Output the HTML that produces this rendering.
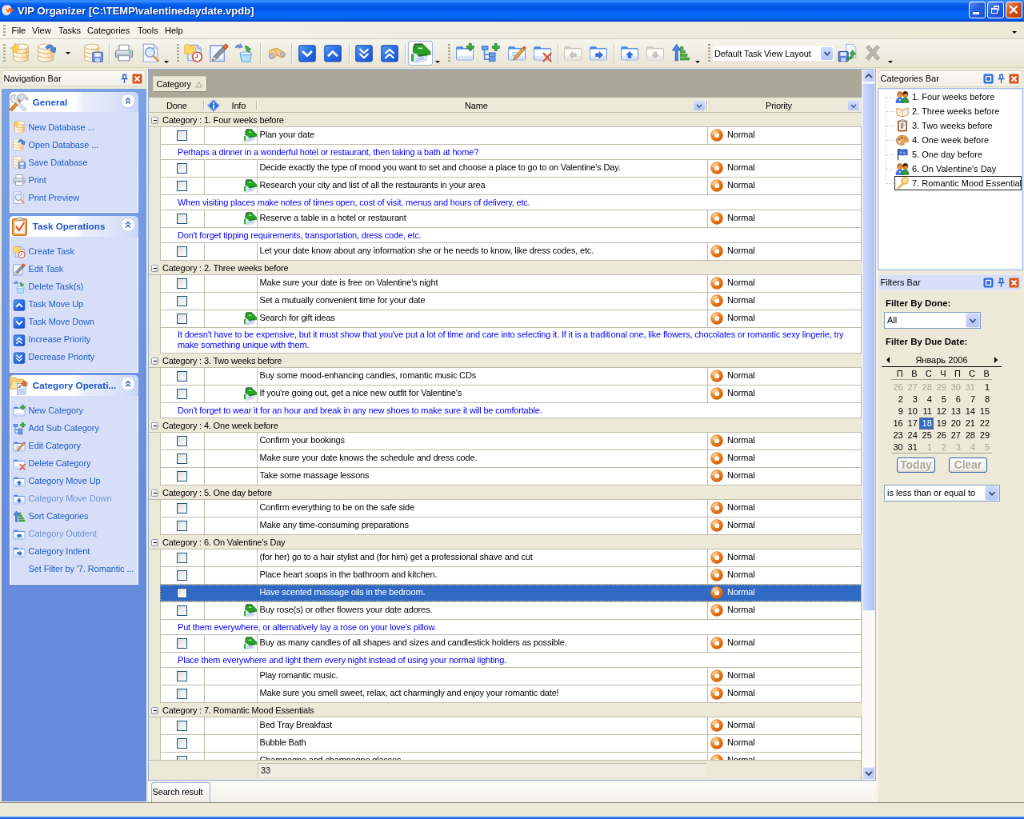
<!DOCTYPE html>
<html><head><meta charset="utf-8"><title>VIP Organizer</title><style>
html,body{margin:0;padding:0;background:#ece9d8;overflow:hidden;}
body{width:1024px;height:819px;position:relative;font-family:"Liberation Sans",sans-serif;}
#root{will-change:transform;position:absolute;left:0;top:0;width:1280px;height:1024px;transform:scale(0.8,0.79981);transform-origin:0 0;background:#ece9d8;font-size:11px;color:#000;overflow:hidden;}
.a{position:absolute;}
.t{position:absolute;white-space:nowrap;line-height:14px;}
svg{position:absolute;overflow:visible;}
/* title */
#title{left:0;top:0;width:1280px;height:26.500px;background:linear-gradient(#2a80fa 0%,#3a93ff 7%,#0f68f0 15%,#0056e4 30%,#0058e8 42%,#0566f6 55%,#0668f8 84%,#0452e0 92%,#003ac4 100%);}
#title .t{left:22px;top:4.800px;font-size:13.05px;font-weight:bold;color:#fff;line-height:18px;text-shadow:1px 1px 0 #0a1f7c;}
.tb{position:absolute;top:2px;width:21px;height:21px;border-radius:3px;border:1px solid #fff;box-sizing:border-box;background:linear-gradient(135deg,#5d8ff5 0%,#2a5fe0 40%,#1d4fd0 100%);}
.tb.c{background:linear-gradient(135deg,#e8966a 0%,#d5501b 45%,#b83a0a 100%);}
/* menu */
#menu{left:0;top:26.500px;width:1280px;height:21.500px;background:linear-gradient(90deg,#f7f6ef 0%,#efede1 40%,#ece9d8 100%);}
#menu .t{top:4px;}
#tool{left:0;top:49px;width:1280px;height:35px;background:#ece9d8;}
#toolg{left:0;top:0;width:1280px;height:35px;background:linear-gradient(#f6f5ee 0%,#efede1 45%,#e9e6d5 100%);}
.grip{position:absolute;width:2.500px;background:repeating-linear-gradient(#a9a692 0 2px,transparent 2px 4px);}
.sep{position:absolute;width:1px;background:#c5c2b2;box-shadow:1px 0 0 #fff;}
.dd{position:absolute;width:0;height:0;border-left:3px solid transparent;border-right:3px solid transparent;border-top:3.500px solid #000;}
/* nav */
#navhdr{left:2px;top:88px;width:180px;height:20px;border-radius:4px;border:1px solid #dcd9c9;box-sizing:border-box;background:linear-gradient(#fbfaf6,#f1efe3);}
#nav{left:2px;top:111px;width:181px;height:891px;background:linear-gradient(#7ba2e7 0%,#668bdd 62%,#668bdd 100%);}
.gh{position:absolute;left:10px;width:161px;height:25px;border-radius:5px 5px 0 0;background:linear-gradient(90deg,#fff 0%,#fff 50%,#e9eefc 58%,#dbe4fa 80%,#c9d6f8 100%);}
.gh .t{left:28.700px;top:5px;font-weight:bold;font-size:11.700px;color:#1c55c8;line-height:15px;}
.gb{position:absolute;left:10px;width:161px;box-sizing:border-box;border:1px solid #fff;border-top:none;background:#d6dff7;}
.ni{position:absolute;left:33.5px;color:#215dc6;white-space:nowrap;line-height:14px;letter-spacing:-0.100px;}
.ni.d{color:#6d93d8;}
.chev{position:absolute;left:139.700px;top:3.200px;width:16px;height:16px;border-radius:8px;background:#fff;box-shadow:0 0 0 1px #c2d0f2;}
/* grid */
#grid{left:185px;top:87px;width:893px;height:889px;background:#fff;}
#gpanel{left:186px;top:87px;width:891px;height:34.800px;background:#aca899;}
#ghead{left:185px;top:121.800px;width:892px;height:19.200px;background:#ece9d8;}
.row{position:absolute;left:185px;width:892px;}
.cat{background:#ece9d8;border-bottom:1px solid #bfbcab;box-sizing:border-box;}
.cat .t{left:18px;top:1.600px;}
.task{background:#ece9d8;}
.gl{position:absolute;background:#bfbcab;}
.cell{position:absolute;top:0;bottom:0;border-left:1px solid #bfbcab;border-bottom:1px solid #bfbcab;box-sizing:border-box;background:#fff;}
.gt{letter-spacing:-0.175px;}
.cb{position:absolute;width:13px;height:13px;box-sizing:border-box;border:1px solid #1c5180;background:linear-gradient(135deg,#dcdcd7,#fff);}
.note{color:#0000ff;}
.sel .cell{background:#316ac5;border-left-color:#316ac5;}
.sel .t{color:#fff;}
.fbtn{position:absolute;width:14px;height:12px;border-radius:2px;background:linear-gradient(#d4ddf8,#b6c6f0);box-shadow:0 0 0 1px #e4eafb;}
/* right */
.phdr{position:absolute;left:1098px;width:180px;height:20px;border-radius:4px;box-sizing:border-box;}
</style></head><body><div id="root">
<div class="a" id="title">
<svg style="left:2px;top:5px" width="16" height="16" viewBox="0 0 16 16"><path d="M.5 7c0-3.500 2.500-5.800 6-5.800 2.500 0 4.500 1 5.500 2.800l-1 7.500c-1.200 1.700-3 2.700-5 2.700C2.800 14.200.5 11 .5 7z" fill="#f6e9e6" stroke="#d9b4aa" stroke-width=".5"/><path d="M1 5.500c1.500-2 3.500-3 5.500-3" fill="none" stroke="#f2b8a0" stroke-width="1.200"/><path d="M6 6.500l2 3.500 1.800-4.500M11 6v4.500M12.500 10.500V6.200c2.800-.3 3 2.600.6 2.800" fill="none" stroke="#e8641a" stroke-width="1.500" stroke-linecap="round" stroke-linejoin="round"/><path d="M3 12.500c2 1 5 1 7 .2" fill="none" stroke="#9fb4e0" stroke-width="1"/></svg>
<div class="t">VIP Organizer [C:\TEMP\valentinedaydate.vpdb]</div>
<div class="tb" style="left:1211px"><div style="position:absolute;left:4px;top:12px;width:8px;height:3px;background:#fff"></div></div>
<div class="tb" style="left:1234px"><div style="position:absolute;left:7px;top:4px;width:7px;height:6px;border:1px solid #fff;border-top-width:2px;box-sizing:border-box"></div><div style="position:absolute;left:4px;top:7px;width:8px;height:7px;border:1px solid #fff;border-top-width:2px;box-sizing:border-box;background:#2a5fe0"></div></div>
<div class="tb c" style="left:1257px"><svg style="left:0px;top:0px" width="18" height="18" viewBox="0 0 18 18"><path d="M5 5l8 8M13 5l-8 8" stroke="#fff" stroke-width="2.200" stroke-linecap="round"/></svg></div>
</div>
<div class="a" id="menu">
<div class="grip" style="left:4px;top:4px;height:14px"></div>
<div class="t" style="left:14.5px">File</div>
<div class="t" style="left:40px">View</div>
<div class="t" style="left:73px">Tasks</div>
<div class="t" style="left:109px">Categories</div>
<div class="t" style="left:172px">Tools</div>
<div class="t" style="left:206px">Help</div>
<div class="dd" style="left:1265px;top:12px"></div>
</div>
<div class="a" style="left:0;top:48px;width:1280px;height:1px;background:#cfc8b8"></div>
<div class="a" id="tool"><div class="a" id="toolg"></div>
<div class="grip" style="left:4px;top:6px;height:24px"></div><svg style="left:12.600000000000001px;top:5px" width="24" height="24" viewBox="0 0 16 16"><defs><linearGradient id="cg" x1="0" x2="1"><stop offset="0" stop-color="#fffdf6"/><stop offset=".5" stop-color="#fbf0d8"/><stop offset="1" stop-color="#efcf98"/></linearGradient></defs><path d="M2.4 2.9V13.100000000000001A6.25 2.3 0 0 0 14.9 13.100000000000001V2.9z" fill="url(#cg)" stroke="#cdb892" stroke-width=".7"/><ellipse cx="8.65" cy="2.9" rx="6.25" ry="2.3" fill="#fff8e6" stroke="#cdb892" stroke-width=".7"/><path d="M2.4 6.300000000000001A6.25 2.3 0 0 0 14.9 6.300000000000001M2.4 9.700000000000001A6.25 2.3 0 0 0 14.9 9.700000000000001" fill="none" stroke="#e9b66a" stroke-width=".8"/><path d="M13.3 4.1V13.700000000000001" stroke="#f2a63a" stroke-width="1" stroke-dasharray="1 1" opacity=".8"/><path d="M4 0l.9 2.600 2.600-.9-1.500 2.300 2.200 1.400-2.700.3-.2 2.700L3.900 6.100 1.600 7.600l.9-2.500L0 3.900l2.700-.5z" fill="#ffd24a" stroke="#f2a21a" stroke-width=".4"/></svg><svg style="left:47.3px;top:5px" width="24" height="24" viewBox="0 0 16 16"><defs><linearGradient id="cg" x1="0" x2="1"><stop offset="0" stop-color="#fffdf6"/><stop offset=".5" stop-color="#fbf0d8"/><stop offset="1" stop-color="#efcf98"/></linearGradient></defs><path d="M0.5 2.9V13.100000000000001A6.35 2.3 0 0 0 13.2 13.100000000000001V2.9z" fill="url(#cg)" stroke="#cdb892" stroke-width=".7"/><ellipse cx="6.85" cy="2.9" rx="6.35" ry="2.3" fill="#fff8e6" stroke="#cdb892" stroke-width=".7"/><path d="M0.5 6.300000000000001A6.35 2.3 0 0 0 13.2 6.300000000000001M0.5 9.700000000000001A6.35 2.3 0 0 0 13.2 9.700000000000001" fill="none" stroke="#e9b66a" stroke-width=".8"/><path d="M11.6 4.1V13.700000000000001" stroke="#f2a63a" stroke-width="1" stroke-dasharray="1 1" opacity=".8"/><path d="M6.500 3.200c2.500-2.600 6-1.800 7.200 1l1.500-.6-.7 4.400-4-2 1.500-.7c-.9-1.500-2.700-1.800-4-.5z" fill="#4a8ae0" stroke="#2a5cae" stroke-width=".5"/></svg><div class="dd" style="left:82px;top:16px"></div><svg style="left:105px;top:5px" width="24" height="24" viewBox="0 0 16 16"><defs><linearGradient id="cg" x1="0" x2="1"><stop offset="0" stop-color="#fffdf6"/><stop offset=".5" stop-color="#fbf0d8"/><stop offset="1" stop-color="#efcf98"/></linearGradient></defs><path d="M0.5 2.9V13.100000000000001A6.0 2.3 0 0 0 12.5 13.100000000000001V2.9z" fill="url(#cg)" stroke="#cdb892" stroke-width=".7"/><ellipse cx="6.5" cy="2.9" rx="6.0" ry="2.3" fill="#fff8e6" stroke="#cdb892" stroke-width=".7"/><path d="M0.5 6.300000000000001A6.0 2.3 0 0 0 12.5 6.300000000000001M0.5 9.700000000000001A6.0 2.3 0 0 0 12.5 9.700000000000001" fill="none" stroke="#e9b66a" stroke-width=".8"/><path d="M10.9 4.1V13.700000000000001" stroke="#f2a63a" stroke-width="1" stroke-dasharray="1 1" opacity=".8"/><rect x="7.200" y="7.500" width="8.300" height="8" rx=".8" fill="#6f94e0" stroke="#3f62b8" stroke-width=".7"/><rect x="8.800" y="8" width="5" height="3.200" fill="#eef2fc"/><rect x="9.300" y="12.600" width="4" height="2.900" fill="#c9d6f2"/></svg><div class="sep" style="left:136px;top:5px;height:26px"></div><svg style="left:143px;top:5px" width="24" height="24" viewBox="0 0 16 16"><path d="M4 6V1.5h8V6" fill="#fff" stroke="#8c96a8" stroke-width=".8"/><rect x="1" y="6" width="14" height="6" rx="1.2" fill="#dfe3ea" stroke="#7d8798" stroke-width=".8"/><rect x="1.4" y="8.5" width="13.2" height="3" fill="#b9c0cc"/><path d="M3.5 10.5h9v4h-9z" fill="#fff" stroke="#8c96a8" stroke-width=".8"/><circle cx="13" cy="7.6" r=".7" fill="#3fae3f"/></svg><svg style="left:177px;top:5px" width="24" height="24" viewBox="0 0 16 16"><path d="M1.500 .8h8.500l3.200 3.200v11.500H1.500z" fill="#f4f7fd" stroke="#9fb0d4" stroke-width=".8"/><path d="M10 .8v3.200h3.200" fill="#dfe6f6" stroke="#9fb0d4" stroke-width=".7"/><circle cx="7" cy="7.600" r="3.900" fill="#dcebfb" stroke="#86a4d8" stroke-width="1.100"/><path d="M9.900 10.600l3.900 4" stroke="#e09a5a" stroke-width="1.900" stroke-linecap="round"/></svg><div class="dd" style="left:205px;top:27px"></div><div class="grip" style="left:221px;top:6px;height:24px"></div><svg style="left:230px;top:5px" width="24" height="24" viewBox="0 0 16 16"><path d="M3.200 1.500h8l3 3v10H3.200z" fill="#dfe9fb" stroke="#86a0dc" stroke-width=".8"/><path d="M11.200 1.500v3h3" fill="#c6d6f6" stroke="#86a0dc" stroke-width=".6"/><path d="M.5 2.200c0-.6.400-1 1-1h2.500l.8 1h4c.6 0 1 .4 1 1v3.600l-2 .6-1.600 1.700-3-.6-2.700.3z" fill="#ffd866" stroke="#e8a834" stroke-width=".5"/><circle cx="11" cy="11.400" r="3.900" fill="#fff" stroke="#d6482c" stroke-width="1.100"/><path d="M11 9.200v2.400l-1.800.6" fill="none" stroke="#556" stroke-width=".8"/></svg><svg style="left:261.6px;top:5px" width="24" height="24" viewBox="0 0 16 16"><path d="M.6 2h11.600v13H.6z" fill="#f2f6fe" stroke="#7f98d0" stroke-width=".9"/><path d="M1 12.500h10.800v2H1z" fill="#c9d8f6"/><path d="M3.200 11.200L11 3l2.400 2.200-7.800 8.200-3.200 1z" fill="#8a93a2" stroke="#555e6c" stroke-width=".5"/><path d="M11 3l1.600-1.800c.5-.5 1.300-.5 1.800 0l.6.600c.5.500.5 1.300 0 1.800L13.400 5.200z" fill="#e4682e" stroke="#a8401a" stroke-width=".5"/><path d="M2.400 14.400l.8-3.200 2.400 2.200z" fill="#f3d9a6"/><path d="M2.400 14.400l.3-1.200.9.800z" fill="#c8501e"/></svg><svg style="left:293px;top:5px" width="24" height="24" viewBox="0 0 16 16"><path d="M4.800 8.500h9.400l-1.200 7H6z" fill="#b9dcfa" stroke="#6aaee4" stroke-width=".8"/><ellipse cx="9.500" cy="8.500" rx="4.700" ry="1.400" fill="#e4f3fd" stroke="#6aaee4" stroke-width=".7"/><path d="M9 2.300c1.700 0 2.900.7 3.300 2.200l1.300-.3-1.300 3.400-3-1.900 1.300-.4c-.3-.8-.9-1.100-1.700-1.100z" fill="#3fae3f" stroke="#23802a" stroke-width=".4"/><path d="M.8 3.500c.5-1.700 2.200-2.500 3.800-2l.3-1.100 2 2.900-3.300.8.300-1.100c-.9-.2-1.400.2-1.800 1z" fill="#6a9ae0" stroke="#3a6ab8" stroke-width=".4"/></svg><div class="sep" style="left:325px;top:5px;height:26px"></div><svg style="left:333px;top:5px" width="24" height="24" viewBox="0 0 16 16"><path d="M2.500 6.500l5-2.300 2.200.600 4.500 2.600c1.200.8 1.500 2.200.8 3.300-.7 1-2 1.400-3.200.8L8.500 9.800 7 11.800c-.8 1.100-2.300 1.400-3.400.700-1.100-.7-1.500-2-1-3.200z" fill="#f6c98a" stroke="#d8963e" stroke-width=".7"/><path d="M6.300 5l2.800 4.500" stroke="#e8a85a" stroke-width=".8"/><ellipse cx="4.300" cy="10.600" rx="2.300" ry="1.700" transform="rotate(-40 4.300 10.600)" fill="#b9c6dc" stroke="#8a98b4" stroke-width=".6"/><ellipse cx="13.300" cy="9.300" rx="1.900" ry="1.500" transform="rotate(50 13.300 9.300)" fill="#b9c6dc" stroke="#8a98b4" stroke-width=".6"/></svg><div class="sep" style="left:364px;top:5px;height:26px"></div><svg style="left:372px;top:5px" width="24" height="24" viewBox="0 0 16 16"><defs><linearGradient id="bb" x1="0" y1="0" x2="1" y2="1"><stop offset="0" stop-color="#5c9ef8"/><stop offset=".5" stop-color="#2a6ee6"/><stop offset="1" stop-color="#174fc8"/></linearGradient></defs><rect x="1.200" y="1.900" width="13.600" height="13.400" rx="1.600" fill="url(#bb)" stroke="#1a4fb8" stroke-width=".8"/><path d="M4.600 7.200L8 10.600l3.400-3.400" fill="none" stroke="#fff" stroke-width="1.800" stroke-linecap="round" stroke-linejoin="round"/></svg><svg style="left:404px;top:5px" width="24" height="24" viewBox="0 0 16 16"><defs><linearGradient id="bb" x1="0" y1="0" x2="1" y2="1"><stop offset="0" stop-color="#5c9ef8"/><stop offset=".5" stop-color="#2a6ee6"/><stop offset="1" stop-color="#174fc8"/></linearGradient></defs><rect x="1.200" y="1.900" width="13.600" height="13.400" rx="1.600" fill="url(#bb)" stroke="#1a4fb8" stroke-width=".8"/><path d="M4.600 10.300L8 6.900l3.400 3.400" fill="none" stroke="#fff" stroke-width="1.800" stroke-linecap="round" stroke-linejoin="round"/></svg><div class="sep" style="left:435.6px;top:5px;height:26px"></div><svg style="left:443px;top:5px" width="24" height="24" viewBox="0 0 16 16"><defs><linearGradient id="bb" x1="0" y1="0" x2="1" y2="1"><stop offset="0" stop-color="#5c9ef8"/><stop offset=".5" stop-color="#2a6ee6"/><stop offset="1" stop-color="#174fc8"/></linearGradient></defs><rect x="1.200" y="1.900" width="13.600" height="13.400" rx="1.600" fill="url(#bb)" stroke="#1a4fb8" stroke-width=".8"/><path d="M4.800 5.200L8 8.200l3.200-3M4.800 9.200L8 12.200l3.200-3" fill="none" stroke="#fff" stroke-width="1.500" stroke-linecap="round" stroke-linejoin="round"/></svg><svg style="left:475px;top:5px" width="24" height="24" viewBox="0 0 16 16"><defs><linearGradient id="bb" x1="0" y1="0" x2="1" y2="1"><stop offset="0" stop-color="#5c9ef8"/><stop offset=".5" stop-color="#2a6ee6"/><stop offset="1" stop-color="#174fc8"/></linearGradient></defs><rect x="1.200" y="1.900" width="13.600" height="13.400" rx="1.600" fill="url(#bb)" stroke="#1a4fb8" stroke-width=".8"/><path d="M4.800 8.200L8 5.200l3.200 3M4.800 12.200L8 9.200l3.200 3" fill="none" stroke="#fff" stroke-width="1.500" stroke-linecap="round" stroke-linejoin="round"/></svg><div class="sep" style="left:506px;top:5px;height:26px"></div><div style="position:absolute;left:510px;top:2px;width:31px;height:31px;box-sizing:border-box;border:1px solid #9fb3dc;border-radius:3px;background:#fff"></div><svg style="left:514px;top:5px" width="24" height="24" viewBox="0 0 16 16"><path d="M2.300 6.500l2.700 2.700 1.600 2 6.600-1-.5 4-9.500 2.300-1.200-1.500z" fill="#e4ecfb" stroke="#a9bde6" stroke-width=".5"/><path d="M4 13.200l7-1.300M3.800 14.600l7-1.500" stroke="#9cb4e6" stroke-width=".7"/><path d="M1.500 5.200L3 1h7l6 6v2.500L6.500 11 5 9 1.500 7.500z" fill="#27a127" stroke="#1b7a1f" stroke-width=".5"/><path d="M1.800 4.200L3 .8h6.800" fill="none" stroke="#2a3a2a" stroke-width=".8"/><path d="M0 9h2v6.200H0z" fill="#2fae2f"/><path d="M5.800 4.200h3.600" stroke="#d6f2d6" stroke-width="1"/><path d="M6.500 10.300l1.200-.2M9 9.900l1.200-.2M11.500 9.500l1.200-.2" stroke="#14401a" stroke-width=".9"/></svg><div class="dd" style="left:544px;top:26.5px"></div><div class="grip" style="left:560px;top:6px;height:24px"></div><svg style="left:569px;top:5px" width="24" height="24" viewBox="0 0 16 16"><path d="M1 4.2c0-.7.5-1.2 1.2-1.2h3.6l1.2 1.3h7.2c.5 0 .8.4.8.8V13c0 .5-.4.9-.9.9H1.9c-.5 0-.9-.4-.9-.9z" fill="#4a86e8" stroke="#5f8fe0" stroke-width=".6"/><rect x="1.300" y="5" width="13.400" height="8.600" rx=".6" fill="#fdfeff"/><rect x="1.300" y="10.500" width="13.400" height="3.100" fill="#cfe0fb" opacity=".8"/><path d="M11.5 0.20000000000000018h2v2h2v2h-2v2h-2v-2h-2v-2h2z" fill="#3fae3f" stroke="#1f7a25" stroke-width=".5"/></svg><svg style="left:601px;top:5px" width="24" height="24" viewBox="0 0 16 16"><path d="M3 5v8.5h5M3 9.5h5" fill="none" stroke="#4a86e8" stroke-width="1"/><rect x="1" y="2.5" width="5" height="3" fill="#6ea0ee" stroke="#2f66c8" stroke-width=".6"/><rect x="7" y="8" width="5" height="3" fill="#6ea0ee" stroke="#2f66c8" stroke-width=".6"/><rect x="7" y="12" width="5" height="3" fill="#6ea0ee" stroke="#2f66c8" stroke-width=".6"/><path d="M11.5 0.2999999999999998h2v2h2v2h-2v2h-2v-2h-2v-2h2z" fill="#3fae3f" stroke="#1f7a25" stroke-width=".5"/></svg><svg style="left:634px;top:5px" width="24" height="24" viewBox="0 0 16 16"><path d="M1 4.2c0-.7.5-1.2 1.2-1.2h3.6l1.2 1.3h7.2c.5 0 .8.4.8.8V13c0 .5-.4.9-.9.9H1.9c-.5 0-.9-.4-.9-.9z" fill="#4a86e8" stroke="#5f8fe0" stroke-width=".6"/><rect x="1.300" y="5" width="13.400" height="8.600" rx=".6" fill="#fdfeff"/><rect x="1.300" y="10.500" width="13.400" height="3.100" fill="#cfe0fb" opacity=".8"/><path d="M4 8h5M4 10h4" stroke="#7fa3e0" stroke-width=".8"/><path d="M6 11.5l7-8 1.8 1.6-7 8-2.6.9z" fill="#e8a04a" stroke="#8a5a20" stroke-width=".5"/><path d="M13 3.5l1-1.2 1.8 1.6-1 1.2z" fill="#e0552a"/></svg><svg style="left:665.7px;top:5px" width="24" height="24" viewBox="0 0 16 16"><path d="M1 4.2c0-.7.5-1.2 1.2-1.2h3.6l1.2 1.3h7.2c.5 0 .8.4.8.8V13c0 .5-.4.9-.9.9H1.9c-.5 0-.9-.4-.9-.9z" fill="#4a86e8" stroke="#5f8fe0" stroke-width=".6"/><rect x="1.300" y="5" width="13.400" height="8.600" rx=".6" fill="#fdfeff"/><rect x="1.300" y="10.500" width="13.400" height="3.100" fill="#cfe0fb" opacity=".8"/><path d="M9 8.5l6 6.5M15 8.5l-6 6.5" stroke="#e0522a" stroke-width="1.5" stroke-linecap="round"/></svg><div class="sep" style="left:696.6px;top:5px;height:26px"></div><svg style="left:704px;top:5px" width="24" height="24" viewBox="0 0 16 16"><path d="M1 4.2c0-.7.5-1.2 1.2-1.2h3.6l1.2 1.3h7.2c.5 0 .8.4.8.8V13c0 .5-.4.9-.9.9H1.9c-.5 0-.9-.4-.9-.9z" fill="#d4d2c8" stroke="#c2c0b5" stroke-width=".6"/><rect x="1.300" y="5" width="13.400" height="8.600" rx=".6" fill="#fbfbf9"/><rect x="1.300" y="10.500" width="13.400" height="3.100" fill="#e6e5dd" opacity=".8"/><path d="M5 9.800l2.800-2.800v1.600h3v2.400h-3v1.600z" fill="#cbc9bf" stroke="#b5b3a8" stroke-width=".5"/></svg><svg style="left:735.6px;top:5px" width="24" height="24" viewBox="0 0 16 16"><path d="M1 4.2c0-.7.5-1.2 1.2-1.2h3.6l1.2 1.3h7.2c.5 0 .8.4.8.8V13c0 .5-.4.9-.9.9H1.9c-.5 0-.9-.4-.9-.9z" fill="#4a86e8" stroke="#5f8fe0" stroke-width=".6"/><rect x="1.300" y="5" width="13.400" height="8.600" rx=".6" fill="#fdfeff"/><rect x="1.300" y="10.500" width="13.400" height="3.100" fill="#cfe0fb" opacity=".8"/><path d="M11.600 9.800L8.800 7v1.600h-3v2.400h3v1.600z" fill="#3a78e0" stroke="#1f4fae" stroke-width=".5"/></svg><div class="sep" style="left:767px;top:5px;height:26px"></div><svg style="left:775px;top:5px" width="24" height="24" viewBox="0 0 16 16"><path d="M1 4.2c0-.7.5-1.2 1.2-1.2h3.6l1.2 1.3h7.2c.5 0 .8.4.8.8V13c0 .5-.4.9-.9.9H1.9c-.5 0-.9-.4-.9-.9z" fill="#4a86e8" stroke="#5f8fe0" stroke-width=".6"/><rect x="1.300" y="5" width="13.400" height="8.600" rx=".6" fill="#fdfeff"/><rect x="1.300" y="10.500" width="13.400" height="3.100" fill="#cfe0fb" opacity=".8"/><path d="M8 7l2.800 2.800H9.200v2.400H6.800V9.800H5.200z" fill="#3a78e0" stroke="#1f4fae" stroke-width=".5"/></svg><svg style="left:806.7px;top:5px" width="24" height="24" viewBox="0 0 16 16"><path d="M1 4.2c0-.7.5-1.2 1.2-1.2h3.6l1.2 1.3h7.2c.5 0 .8.4.8.8V13c0 .5-.4.9-.9.9H1.9c-.5 0-.9-.4-.9-.9z" fill="#d4d2c8" stroke="#c2c0b5" stroke-width=".6"/><rect x="1.300" y="5" width="13.400" height="8.600" rx=".6" fill="#fbfbf9"/><rect x="1.300" y="10.500" width="13.400" height="3.100" fill="#e6e5dd" opacity=".8"/><path d="M8 12.600l2.800-2.800H9.200V7.400H6.800v2.400H5.200z" fill="#cbc9bf" stroke="#b5b3a8" stroke-width=".5"/></svg><svg style="left:839px;top:5px" width="24" height="24" viewBox="0 0 16 16"><path d="M3.5 14.5V6H1l3.5-5L8 6H5.5v8.5z" fill="#4a86e8" stroke="#2458b8" stroke-width=".6"/><g fill="#4cae3c" stroke="#2a7a22" stroke-width=".4"><rect x="7.5" y="3" width="2.5" height="2"/><rect x="7.5" y="6" width="4" height="2"/><rect x="7.5" y="9" width="5.8" height="2"/><rect x="7.5" y="12" width="7.6" height="2"/></g></svg><div class="dd" style="left:869px;top:26.5px"></div><div class="grip" style="left:885px;top:6px;height:24px"></div><div style="position:absolute;left:891px;top:9px;width:151px;height:18px;background:#fff"><div class="t" style="left:2px;top:2px;letter-spacing:-0.100px">Default Task View Layout</div><div style="position:absolute;right:1px;top:1px;width:15px;height:16px;border-radius:2px;background:linear-gradient(#cdd9fb,#b4c5f3)"><svg style="left:3px;top:3.0px" width="10" height="10" viewBox="0 0 10 10"><path d="M1.500 3l3.500 3.800L8.500 3" fill="none" stroke="#3a4f80" stroke-width="1.800"/></svg></div></div><svg style="left:1047px;top:5px" width="24" height="24" viewBox="0 0 16 16"><path d="M7 .8h5.500l2.700 2.700v8.500H7z" fill="#f3f7fe" stroke="#9fb3dc" stroke-width=".7"/><rect x=".8" y="7" width="8" height="8.200" rx=".8" fill="#5b83d6" stroke="#2f4fa2" stroke-width=".7"/><rect x="2.300" y="7.500" width="5" height="3" fill="#e8eefc"/><rect x="3" y="12.200" width="3.600" height="3" fill="#c9d4ee"/><path d="M8.500 13.500c3.500.5 5-2 5-4.500l1.700.3-2.700-3.500-2.500 3 1.600.1c0 1.700-1 3-3.100 2.900z" fill="#3fae3f" stroke="#1f7a25" stroke-width=".5"/></svg><svg style="left:1079px;top:5px" width="24" height="24" viewBox="0 0 16 16"><path d="M2.500 3.500L4.700 1.800 8 5.600l3.300-3.800 2.200 1.700L10 7.800l3.700 4.500-2.300 1.900L8 10l-3.400 4.200-2.300-1.900L6 7.800z" fill="#b9b8ad" stroke="#9c9b90" stroke-width=".6"/></svg><div class="dd" style="left:1109.5px;top:26.5px"></div>
</div>
<div class="a" style="left:0;top:84px;width:1280px;height:1px;background:#d8d4c2"></div>
<div class="a" id="navhdr"><div class="t" style="left:1.500px;top:2px">Navigation Bar</div><svg style="left:146px;top:3px" width="13" height="13" viewBox="0 0 13 13"><path d="M4 1.500h5M5 1.500v4.500M8.500 1.500v4.500M2.500 6.500h8M6.500 6.500V12" fill="none" stroke="#1f5fd0" stroke-width="1.300"/></svg><svg style="left:162px;top:3px" width="13" height="13" viewBox="0 0 13 13"><rect x=".5" y=".5" width="12" height="12" rx="1.500" fill="#d8541c" stroke="#e8a07a" stroke-width=".6"/><path d="M3.500 3.500l6 6M9.500 3.500l-6 6" stroke="#fff" stroke-width="1.800"/></svg></div>
<div class="a" id="nav">
<div class="gh" style="top:4px;height:25px"><svg style="left:0px;top:0.5px" width="24" height="24" viewBox="0 0 24 24"><path d="M1 19.500L11.500 8l2.800 2.600L3.800 22.200c-.8.800-2 .8-2.800 0-.8-.8-.8-1.900 0-2.700z" fill="#e8892e" stroke="#a85a18" stroke-width=".8"/><path d="M9 4.500c2.500-3 7.500-4 11-1 1.500 1.300 2.500 3 3 4.800l-2.200.6c-.5-1.200-1.200-2-2-2.500l-4 4.300-3.500-3.200z" fill="#d5dbe6" stroke="#8791a6" stroke-width=".8"/><path d="M2.200 4.200c1.500-1.800 4-2 5.600-.8l-2 2.200.8 1.800 1.800.6 2-2.200c.8 1.500.6 3.200-.4 4.500l9.800 9.200c.7.700.7 1.800 0 2.500-.7.700-1.800.7-2.500 0L7.800 12.500c-1.600.7-3.500.4-4.800-.8C1.500 9.900 1 6.500 2.200 4.200z" fill="#e4e9f2" stroke="#8a95ad" stroke-width=".8"/></svg><div class="t">General</div><div class="chev"><svg style="left:0px;top:0px" width="16" height="16" viewBox="0 0 16 16"><path d="M5.200 7.600L8 4.800l2.800 2.800M5.200 11.400L8 8.600l2.800 2.800" fill="none" stroke="#215dc6" stroke-width="1.400"/></svg></div></div>
<div class="gb" style="top:29px;height:126px">
<svg style="left:3px;top:11px" width="16" height="16" viewBox="0 0 16 16"><defs><linearGradient id="cg" x1="0" x2="1"><stop offset="0" stop-color="#fffdf6"/><stop offset=".5" stop-color="#fbf0d8"/><stop offset="1" stop-color="#efcf98"/></linearGradient></defs><path d="M2.4 2.9V13.100000000000001A6.25 2.3 0 0 0 14.9 13.100000000000001V2.9z" fill="url(#cg)" stroke="#cdb892" stroke-width=".7"/><ellipse cx="8.65" cy="2.9" rx="6.25" ry="2.3" fill="#fff8e6" stroke="#cdb892" stroke-width=".7"/><path d="M2.4 6.300000000000001A6.25 2.3 0 0 0 14.9 6.300000000000001M2.4 9.700000000000001A6.25 2.3 0 0 0 14.9 9.700000000000001" fill="none" stroke="#e9b66a" stroke-width=".8"/><path d="M13.3 4.1V13.700000000000001" stroke="#f2a63a" stroke-width="1" stroke-dasharray="1 1" opacity=".8"/><path d="M4 0l.9 2.600 2.600-.9-1.500 2.300 2.200 1.400-2.700.3-.2 2.700L3.900 6.100 1.600 7.600l.9-2.500L0 3.900l2.700-.5z" fill="#ffd24a" stroke="#f2a21a" stroke-width=".4"/></svg>
<div class="ni" style="left:22.500px;top:11.5px">New Database ...</div>
<svg style="left:3px;top:33px" width="16" height="16" viewBox="0 0 16 16"><defs><linearGradient id="cg" x1="0" x2="1"><stop offset="0" stop-color="#fffdf6"/><stop offset=".5" stop-color="#fbf0d8"/><stop offset="1" stop-color="#efcf98"/></linearGradient></defs><path d="M0.5 2.9V13.100000000000001A6.35 2.3 0 0 0 13.2 13.100000000000001V2.9z" fill="url(#cg)" stroke="#cdb892" stroke-width=".7"/><ellipse cx="6.85" cy="2.9" rx="6.35" ry="2.3" fill="#fff8e6" stroke="#cdb892" stroke-width=".7"/><path d="M0.5 6.300000000000001A6.35 2.3 0 0 0 13.2 6.300000000000001M0.5 9.700000000000001A6.35 2.3 0 0 0 13.2 9.700000000000001" fill="none" stroke="#e9b66a" stroke-width=".8"/><path d="M11.6 4.1V13.700000000000001" stroke="#f2a63a" stroke-width="1" stroke-dasharray="1 1" opacity=".8"/><path d="M6.500 3.200c2.500-2.600 6-1.800 7.200 1l1.500-.6-.7 4.400-4-2 1.500-.7c-.9-1.500-2.700-1.800-4-.5z" fill="#4a8ae0" stroke="#2a5cae" stroke-width=".5"/></svg>
<div class="ni" style="left:22.500px;top:33.5px">Open Database ...</div>
<svg style="left:3px;top:55px" width="16" height="16" viewBox="0 0 16 16"><defs><linearGradient id="cg" x1="0" x2="1"><stop offset="0" stop-color="#fffdf6"/><stop offset=".5" stop-color="#fbf0d8"/><stop offset="1" stop-color="#efcf98"/></linearGradient></defs><path d="M0.5 2.9V13.100000000000001A6.0 2.3 0 0 0 12.5 13.100000000000001V2.9z" fill="url(#cg)" stroke="#cdb892" stroke-width=".7"/><ellipse cx="6.5" cy="2.9" rx="6.0" ry="2.3" fill="#fff8e6" stroke="#cdb892" stroke-width=".7"/><path d="M0.5 6.300000000000001A6.0 2.3 0 0 0 12.5 6.300000000000001M0.5 9.700000000000001A6.0 2.3 0 0 0 12.5 9.700000000000001" fill="none" stroke="#e9b66a" stroke-width=".8"/><path d="M10.9 4.1V13.700000000000001" stroke="#f2a63a" stroke-width="1" stroke-dasharray="1 1" opacity=".8"/><rect x="7.200" y="7.500" width="8.300" height="8" rx=".8" fill="#6f94e0" stroke="#3f62b8" stroke-width=".7"/><rect x="8.800" y="8" width="5" height="3.200" fill="#eef2fc"/><rect x="9.300" y="12.600" width="4" height="2.900" fill="#c9d6f2"/></svg>
<div class="ni" style="left:22.500px;top:55.5px">Save Database</div>
<svg style="left:3px;top:77px" width="16" height="16" viewBox="0 0 16 16"><path d="M4 6V1.5h8V6" fill="#fff" stroke="#8c96a8" stroke-width=".8"/><rect x="1" y="6" width="14" height="6" rx="1.2" fill="#dfe3ea" stroke="#7d8798" stroke-width=".8"/><rect x="1.4" y="8.5" width="13.2" height="3" fill="#b9c0cc"/><path d="M3.5 10.5h9v4h-9z" fill="#fff" stroke="#8c96a8" stroke-width=".8"/><circle cx="13" cy="7.6" r=".7" fill="#3fae3f"/></svg>
<div class="ni" style="left:22.500px;top:77.5px">Print</div>
<svg style="left:3px;top:99px" width="16" height="16" viewBox="0 0 16 16"><path d="M1.500 .8h8.500l3.200 3.200v11.500H1.500z" fill="#f4f7fd" stroke="#9fb0d4" stroke-width=".8"/><path d="M10 .8v3.200h3.200" fill="#dfe6f6" stroke="#9fb0d4" stroke-width=".7"/><circle cx="7" cy="7.600" r="3.900" fill="#dcebfb" stroke="#86a4d8" stroke-width="1.100"/><path d="M9.900 10.600l3.900 4" stroke="#e09a5a" stroke-width="1.900" stroke-linecap="round"/></svg>
<div class="ni" style="left:22.500px;top:99.5px">Print Preview</div>
</div>
<div class="gh" style="top:159px;height:26px"><svg style="left:1px;top:0.5px" width="24" height="24" viewBox="0 0 24 24"><rect x="2.500" y="2.500" width="18" height="21" rx="1.800" fill="#ee9a3e" stroke="#c8701e" stroke-width="1"/><rect x="5" y="5.500" width="13" height="15.500" fill="#fdfdfb" stroke="#d9cdb2" stroke-width=".6"/><path d="M5 21l13 0 0-6z" fill="#e6e6e6" opacity=".6"/><rect x="8" y=".8" width="7" height="3.600" rx="1.200" fill="#cfd2da" stroke="#8a8fa0" stroke-width=".7"/><path d="M7.500 12.500l3.200 4.500 6-9" fill="none" stroke="#e0551e" stroke-width="2.200" stroke-linecap="round" stroke-linejoin="round"/></svg><div class="t">Task Operations</div><div class="chev"><svg style="left:0px;top:0px" width="16" height="16" viewBox="0 0 16 16"><path d="M5.200 7.600L8 4.800l2.800 2.800M5.200 11.400L8 8.600l2.800 2.800" fill="none" stroke="#215dc6" stroke-width="1.400"/></svg></div></div>
<div class="gb" style="top:185px;height:170px">
<svg style="left:3px;top:11px" width="16" height="16" viewBox="0 0 16 16"><path d="M3.200 1.500h8l3 3v10H3.200z" fill="#dfe9fb" stroke="#86a0dc" stroke-width=".8"/><path d="M11.200 1.500v3h3" fill="#c6d6f6" stroke="#86a0dc" stroke-width=".6"/><path d="M.5 2.200c0-.6.400-1 1-1h2.500l.8 1h4c.6 0 1 .4 1 1v3.600l-2 .6-1.600 1.700-3-.6-2.700.3z" fill="#ffd866" stroke="#e8a834" stroke-width=".5"/><circle cx="11" cy="11.400" r="3.900" fill="#fff" stroke="#d6482c" stroke-width="1.100"/><path d="M11 9.200v2.400l-1.800.6" fill="none" stroke="#556" stroke-width=".8"/></svg>
<div class="ni" style="left:22.500px;top:10.5px">Create Task</div>
<svg style="left:3px;top:33px" width="16" height="16" viewBox="0 0 16 16"><path d="M.6 2h11.600v13H.6z" fill="#f2f6fe" stroke="#7f98d0" stroke-width=".9"/><path d="M1 12.500h10.800v2H1z" fill="#c9d8f6"/><path d="M3.200 11.200L11 3l2.400 2.200-7.800 8.200-3.200 1z" fill="#8a93a2" stroke="#555e6c" stroke-width=".5"/><path d="M11 3l1.600-1.800c.5-.5 1.300-.5 1.800 0l.6.600c.5.500.5 1.300 0 1.800L13.400 5.200z" fill="#e4682e" stroke="#a8401a" stroke-width=".5"/><path d="M2.400 14.400l.8-3.200 2.400 2.200z" fill="#f3d9a6"/><path d="M2.400 14.400l.3-1.200.9.800z" fill="#c8501e"/></svg>
<div class="ni" style="left:22.500px;top:32.5px">Edit Task</div>
<svg style="left:3px;top:55px" width="16" height="16" viewBox="0 0 16 16"><path d="M4.800 8.500h9.400l-1.200 7H6z" fill="#b9dcfa" stroke="#6aaee4" stroke-width=".8"/><ellipse cx="9.500" cy="8.500" rx="4.700" ry="1.400" fill="#e4f3fd" stroke="#6aaee4" stroke-width=".7"/><path d="M9 2.300c1.700 0 2.900.7 3.300 2.200l1.300-.3-1.300 3.400-3-1.900 1.300-.4c-.3-.8-.9-1.100-1.700-1.100z" fill="#3fae3f" stroke="#23802a" stroke-width=".4"/><path d="M.8 3.500c.5-1.700 2.200-2.500 3.800-2l.3-1.100 2 2.900-3.300.8.300-1.100c-.9-.2-1.400.2-1.800 1z" fill="#6a9ae0" stroke="#3a6ab8" stroke-width=".4"/></svg>
<div class="ni" style="left:22.500px;top:54.5px">Delete Task(s)</div>
<svg style="left:3px;top:77px" width="16" height="16" viewBox="0 0 16 16"><defs><linearGradient id="bb" x1="0" y1="0" x2="1" y2="1"><stop offset="0" stop-color="#5c9ef8"/><stop offset=".5" stop-color="#2a6ee6"/><stop offset="1" stop-color="#174fc8"/></linearGradient></defs><rect x="1.200" y="1.900" width="13.600" height="13.400" rx="1.600" fill="url(#bb)" stroke="#1a4fb8" stroke-width=".8"/><path d="M4.600 10.300L8 6.900l3.400 3.400" fill="none" stroke="#fff" stroke-width="1.800" stroke-linecap="round" stroke-linejoin="round"/></svg>
<div class="ni" style="left:22.500px;top:76.5px">Task Move Up</div>
<svg style="left:3px;top:99px" width="16" height="16" viewBox="0 0 16 16"><defs><linearGradient id="bb" x1="0" y1="0" x2="1" y2="1"><stop offset="0" stop-color="#5c9ef8"/><stop offset=".5" stop-color="#2a6ee6"/><stop offset="1" stop-color="#174fc8"/></linearGradient></defs><rect x="1.200" y="1.900" width="13.600" height="13.400" rx="1.600" fill="url(#bb)" stroke="#1a4fb8" stroke-width=".8"/><path d="M4.600 7.200L8 10.600l3.400-3.400" fill="none" stroke="#fff" stroke-width="1.800" stroke-linecap="round" stroke-linejoin="round"/></svg>
<div class="ni" style="left:22.500px;top:98.5px">Task Move Down</div>
<svg style="left:3px;top:121px" width="16" height="16" viewBox="0 0 16 16"><defs><linearGradient id="bb" x1="0" y1="0" x2="1" y2="1"><stop offset="0" stop-color="#5c9ef8"/><stop offset=".5" stop-color="#2a6ee6"/><stop offset="1" stop-color="#174fc8"/></linearGradient></defs><rect x="1.200" y="1.900" width="13.600" height="13.400" rx="1.600" fill="url(#bb)" stroke="#1a4fb8" stroke-width=".8"/><path d="M4.800 8.200L8 5.200l3.200 3M4.800 12.200L8 9.200l3.200 3" fill="none" stroke="#fff" stroke-width="1.500" stroke-linecap="round" stroke-linejoin="round"/></svg>
<div class="ni" style="left:22.500px;top:120.5px">Increase Priority</div>
<svg style="left:3px;top:143px" width="16" height="16" viewBox="0 0 16 16"><defs><linearGradient id="bb" x1="0" y1="0" x2="1" y2="1"><stop offset="0" stop-color="#5c9ef8"/><stop offset=".5" stop-color="#2a6ee6"/><stop offset="1" stop-color="#174fc8"/></linearGradient></defs><rect x="1.200" y="1.900" width="13.600" height="13.400" rx="1.600" fill="url(#bb)" stroke="#1a4fb8" stroke-width=".8"/><path d="M4.800 5.200L8 8.200l3.200-3M4.800 9.200L8 12.200l3.200-3" fill="none" stroke="#fff" stroke-width="1.500" stroke-linecap="round" stroke-linejoin="round"/></svg>
<div class="ni" style="left:22.500px;top:142.5px">Decrease Priority</div>
</div>
<div class="gh" style="top:358px;height:26px"><svg style="left:0px;top:0.5px" width="24" height="24" viewBox="0 0 24 24"><path d="M.8 3.500c0-.9.600-1.500 1.500-1.500h5.500l1.500 2h7c.8 0 1.400.6 1.400 1.400V16H.8z" fill="#f9d27a" stroke="#e0a23a" stroke-width=".8"/><path d="M.8 16l2.200-9h16.500L17 16z" fill="#fde6a8" stroke="#e0a23a" stroke-width=".8"/><rect x="9.500" y="9.500" width="10.500" height="13.500" fill="#e6eefc" stroke="#7f9ad6" stroke-width=".8"/><rect x="11" y="16" width="7.500" height="5.500" fill="#bcd0f4"/><path d="M11 12.500h4M11 14.500h3" stroke="#8fa8dc" stroke-width=".8"/><path d="M11 15l4-3.500" stroke="#7a4a1a" stroke-width="1"/><path d="M15.500 8.500c.8-1.500 2.800-2.200 4.500-1.400 1.700.8 2.300 2.600 1.600 4.200-.5 1-1.500 1.600-2.500 1.700l-2.600-.9c-1-.9-1.500-2.300-1-3.600z" fill="#e8642a" stroke="#b8420e" stroke-width=".6"/></svg><div class="t">Category Operati...</div><div class="chev"><svg style="left:0px;top:0px" width="16" height="16" viewBox="0 0 16 16"><path d="M5.200 7.600L8 4.800l2.800 2.800M5.200 11.400L8 8.600l2.800 2.800" fill="none" stroke="#215dc6" stroke-width="1.400"/></svg></div></div>
<div class="gb" style="top:384px;height:236px">
<svg style="left:3px;top:11px" width="16" height="16" viewBox="0 0 16 16"><path d="M1 4.2c0-.7.5-1.2 1.2-1.2h3.6l1.2 1.3h7.2c.5 0 .8.4.8.8V13c0 .5-.4.9-.9.9H1.9c-.5 0-.9-.4-.9-.9z" fill="#4a86e8" stroke="#5f8fe0" stroke-width=".6"/><rect x="1.300" y="5" width="13.400" height="8.600" rx=".6" fill="#fdfeff"/><rect x="1.300" y="10.500" width="13.400" height="3.100" fill="#cfe0fb" opacity=".8"/><path d="M11.5 0.20000000000000018h2v2h2v2h-2v2h-2v-2h-2v-2h2z" fill="#3fae3f" stroke="#1f7a25" stroke-width=".5"/></svg>
<div class="ni" style="left:22.500px;top:10.5px">New Category</div>
<svg style="left:3px;top:33px" width="16" height="16" viewBox="0 0 16 16"><path d="M3 5v8.5h5M3 9.5h5" fill="none" stroke="#4a86e8" stroke-width="1"/><rect x="1" y="2.5" width="5" height="3" fill="#6ea0ee" stroke="#2f66c8" stroke-width=".6"/><rect x="7" y="8" width="5" height="3" fill="#6ea0ee" stroke="#2f66c8" stroke-width=".6"/><rect x="7" y="12" width="5" height="3" fill="#6ea0ee" stroke="#2f66c8" stroke-width=".6"/><path d="M11.5 0.2999999999999998h2v2h2v2h-2v2h-2v-2h-2v-2h2z" fill="#3fae3f" stroke="#1f7a25" stroke-width=".5"/></svg>
<div class="ni" style="left:22.500px;top:32.5px">Add Sub Category</div>
<svg style="left:3px;top:55px" width="16" height="16" viewBox="0 0 16 16"><path d="M1 4.2c0-.7.5-1.2 1.2-1.2h3.6l1.2 1.3h7.2c.5 0 .8.4.8.8V13c0 .5-.4.9-.9.9H1.9c-.5 0-.9-.4-.9-.9z" fill="#4a86e8" stroke="#5f8fe0" stroke-width=".6"/><rect x="1.300" y="5" width="13.400" height="8.600" rx=".6" fill="#fdfeff"/><rect x="1.300" y="10.500" width="13.400" height="3.100" fill="#cfe0fb" opacity=".8"/><path d="M4 8h5M4 10h4" stroke="#7fa3e0" stroke-width=".8"/><path d="M6 11.5l7-8 1.8 1.6-7 8-2.6.9z" fill="#e8a04a" stroke="#8a5a20" stroke-width=".5"/><path d="M13 3.5l1-1.2 1.8 1.6-1 1.2z" fill="#e0552a"/></svg>
<div class="ni" style="left:22.500px;top:54.5px">Edit Category</div>
<svg style="left:3px;top:77px" width="16" height="16" viewBox="0 0 16 16"><path d="M1 4.2c0-.7.5-1.2 1.2-1.2h3.6l1.2 1.3h7.2c.5 0 .8.4.8.8V13c0 .5-.4.9-.9.9H1.9c-.5 0-.9-.4-.9-.9z" fill="#4a86e8" stroke="#5f8fe0" stroke-width=".6"/><rect x="1.300" y="5" width="13.400" height="8.600" rx=".6" fill="#fdfeff"/><rect x="1.300" y="10.500" width="13.400" height="3.100" fill="#cfe0fb" opacity=".8"/><path d="M9 8.5l6 6.5M15 8.5l-6 6.5" stroke="#e0522a" stroke-width="1.5" stroke-linecap="round"/></svg>
<div class="ni" style="left:22.500px;top:76.5px">Delete Category</div>
<svg style="left:3px;top:99px" width="16" height="16" viewBox="0 0 16 16"><path d="M1 4.2c0-.7.5-1.2 1.2-1.2h3.6l1.2 1.3h7.2c.5 0 .8.4.8.8V13c0 .5-.4.9-.9.9H1.9c-.5 0-.9-.4-.9-.9z" fill="#4a86e8" stroke="#5f8fe0" stroke-width=".6"/><rect x="1.300" y="5" width="13.400" height="8.600" rx=".6" fill="#fdfeff"/><rect x="1.300" y="10.500" width="13.400" height="3.100" fill="#cfe0fb" opacity=".8"/><path d="M8 7l2.800 2.800H9.200v2.400H6.800V9.800H5.200z" fill="#3a78e0" stroke="#1f4fae" stroke-width=".5"/></svg>
<div class="ni" style="left:22.500px;top:98.5px">Category Move Up</div>
<svg style="left:3px;top:121px" width="16" height="16" viewBox="0 0 16 16"><path d="M1 4.2c0-.7.5-1.2 1.2-1.2h3.6l1.2 1.3h7.2c.5 0 .8.4.8.8V13c0 .5-.4.9-.9.9H1.9c-.5 0-.9-.4-.9-.9z" fill="#4a86e8" stroke="#5f8fe0" stroke-width=".6"/><rect x="1.300" y="5" width="13.400" height="8.600" rx=".6" fill="#fdfeff"/><rect x="1.300" y="10.500" width="13.400" height="3.100" fill="#cfe0fb" opacity=".8"/><path d="M8 12.600l2.800-2.800H9.200V7.400H6.800v2.400H5.200z" fill="#3a78e0" stroke="#1f4fae" stroke-width=".5"/></svg>
<div class="ni d" style="left:22.500px;top:120.5px">Category Move Down</div>
<svg style="left:3px;top:143px" width="16" height="16" viewBox="0 0 16 16"><path d="M3.5 14.5V6H1l3.5-5L8 6H5.5v8.5z" fill="#4a86e8" stroke="#2458b8" stroke-width=".6"/><g fill="#4cae3c" stroke="#2a7a22" stroke-width=".4"><rect x="7.5" y="3" width="2.5" height="2"/><rect x="7.5" y="6" width="4" height="2"/><rect x="7.5" y="9" width="5.8" height="2"/><rect x="7.5" y="12" width="7.6" height="2"/></g></svg>
<div class="ni" style="left:22.500px;top:142.5px">Sort Categories</div>
<svg style="left:3px;top:165px" width="16" height="16" viewBox="0 0 16 16"><path d="M1 4.2c0-.7.5-1.2 1.2-1.2h3.6l1.2 1.3h7.2c.5 0 .8.4.8.8V13c0 .5-.4.9-.9.9H1.9c-.5 0-.9-.4-.9-.9z" fill="#4a86e8" stroke="#5f8fe0" stroke-width=".6"/><rect x="1.300" y="5" width="13.400" height="8.600" rx=".6" fill="#fdfeff"/><rect x="1.300" y="10.500" width="13.400" height="3.100" fill="#cfe0fb" opacity=".8"/><path d="M5 9.800l2.800-2.800v1.600h3v2.400h-3v1.600z" fill="#3a78e0" stroke="#1f4fae" stroke-width=".5"/></svg>
<div class="ni d" style="left:22.500px;top:164.5px">Category Outdent</div>
<svg style="left:3px;top:187px" width="16" height="16" viewBox="0 0 16 16"><path d="M1 4.2c0-.7.5-1.2 1.2-1.2h3.6l1.2 1.3h7.2c.5 0 .8.4.8.8V13c0 .5-.4.9-.9.9H1.9c-.5 0-.9-.4-.9-.9z" fill="#4a86e8" stroke="#5f8fe0" stroke-width=".6"/><rect x="1.300" y="5" width="13.400" height="8.600" rx=".6" fill="#fdfeff"/><rect x="1.300" y="10.500" width="13.400" height="3.100" fill="#cfe0fb" opacity=".8"/><path d="M11.600 9.800L8.800 7v1.600h-3v2.400h3v1.600z" fill="#3a78e0" stroke="#1f4fae" stroke-width=".5"/></svg>
<div class="ni" style="left:22.500px;top:186.5px">Category Indent</div>
<div class="ni" style="left:22.500px;top:208.5px">Set Filter by '7. Romantic ...</div>
</div>
</div>
<div class="a" style="left:183px;top:85px;width:2px;height:918px;background:#ece9d8"></div>
<div class="a" style="left:184px;top:86px;width:911px;height:890px;border:1px solid #9ab0e0;border-left-color:#f6f5f0;box-sizing:border-box;background:#ece9d8"></div>
<div class="a" style="left:185px;top:86px;width:1.300px;height:890px;background:#8ea6da;z-index:5"></div>
<div class="a" id="gpanel"><div class="a" style="left:6px;top:9px;width:66px;height:18px;background:#ece9d8;box-shadow:1px 1px 0 #8f8c7d, -1px -1px 0 #d9d7c8"><div class="t gt" style="left:3.500px;top:2px">Category</div><svg style="left:51.5px;top:5px" width="9" height="9" viewBox="0 0 9 9"><path d="M4.500 1L8 8H1z" fill="#ece9d8" stroke="#aca899" stroke-width="1"/></svg></div></div>
<div class="a" id="ghead">
<div class="t gt" style="left:23px;top:3px">Done</div>
<div class="a" style="left:69px;top:4px;width:1px;height:12px;background:#bfbcab;box-shadow:1px 0 0 #fff"></div>
<svg style="left:74px;top:2px" width="16" height="16" viewBox="0 0 14 14"><path d="M7 .5L13.500 7 7 13.500.5 7z" fill="#2f72e0" stroke="#9fc0f5" stroke-width="1"/><rect x="6.200" y="6" width="1.700" height="4.200" fill="#fff"/><rect x="6.200" y="3.500" width="1.700" height="1.600" fill="#fff"/></svg>
<div class="t gt" style="left:104.500px;top:3px">Info</div>
<div class="a" style="left:135px;top:4px;width:1px;height:12px;background:#bfbcab;box-shadow:1px 0 0 #fff"></div>
<div class="t gt" style="left:396px;top:3px">Name</div>
<div class="fbtn" style="left:682px;top:4px"><svg style="left:3px;top:3px" width="8" height="8" viewBox="0 0 8 8"><path d="M1 2l3 3.200L7 2" fill="none" stroke="#3a5a9a" stroke-width="1.600"/></svg></div>
<div class="a" style="left:698px;top:4px;width:1px;height:12px;background:#bfbcab;box-shadow:1px 0 0 #fff"></div>
<div class="t gt" style="left:772px;top:3px">Priority</div>
<div class="fbtn" style="left:875px;top:4px"><svg style="left:3px;top:3px" width="8" height="8" viewBox="0 0 8 8"><path d="M1 2l3 3.200L7 2" fill="none" stroke="#3a5a9a" stroke-width="1.600"/></svg></div>
<div class="a" style="left:0;top:18.200px;width:892px;height:1px;background:#bfbcab"></div>
</div>
<div class="a" style="left:185px;top:141px;width:892px;height:809px;overflow:hidden;background:#ece9d8">
<div class="row cat" style="left:0;top:0px;height:18px"><div style="position:absolute;left:4px;top:5px;width:9px;height:9px;box-sizing:border-box;border:1px solid #8b9bb8;border-radius:1.500px;background:linear-gradient(135deg,#fff,#dcd9cc)"><div style="position:absolute;left:1.500px;top:3px;width:4px;height:1px;background:#000"></div></div><div class="t gt">Category : 1. Four weeks before</div></div>
<div class="row task" style="left:0;top:18px;height:22px">
<div class="cell" style="left:15px;width:55px"><div class="cb" style="left:20px;top:4px"></div></div>
<div class="cell" style="left:70px;width:66px"><svg style="left:49px;top:2px" width="16" height="16" viewBox="0 0 16 16"><path d="M2.300 6.500l2.700 2.700 1.600 2 6.600-1-.5 4-9.500 2.300-1.200-1.500z" fill="#e4ecfb" stroke="#a9bde6" stroke-width=".5"/><path d="M4 13.200l7-1.300M3.800 14.600l7-1.500" stroke="#9cb4e6" stroke-width=".7"/><path d="M1.500 5.200L3 1h7l6 6v2.500L6.500 11 5 9 1.500 7.500z" fill="#27a127" stroke="#1b7a1f" stroke-width=".5"/><path d="M1.800 4.200L3 .8h6.800" fill="none" stroke="#2a3a2a" stroke-width=".8"/><path d="M0 9h2v6.200H0z" fill="#2fae2f"/><path d="M5.800 4.200h3.600" stroke="#d6f2d6" stroke-width="1"/><path d="M6.500 10.300l1.200-.2M9 9.900l1.200-.2M11.500 9.500l1.200-.2" stroke="#14401a" stroke-width=".9"/></svg></div>
<div class="cell" style="left:136px;width:563px"><div class="t gt" style="left:2.500px;top:1.800px">Plan your date</div></div>
<div class="cell" style="left:699px;width:193px;border-right:1px solid #bfbcab"><svg style="left:3px;top:2px" width="16" height="16" viewBox="0 0 16 16"><defs><radialGradient id="pg" cx=".32" cy=".28" r=".8"><stop offset="0" stop-color="#fbc88c"/><stop offset=".45" stop-color="#ee8a2e"/><stop offset=".75" stop-color="#e06a10"/><stop offset="1" stop-color="#c85808"/></radialGradient></defs><circle cx="8" cy="8" r="7.800" fill="url(#pg)"/><circle cx="8.200" cy="8.200" r="2.900" fill="#fff"/><path d="M2.800 7c.8-2.800 3.600-4.600 6.400-4" fill="none" stroke="#fde0bc" stroke-width="1.300" opacity=".75"/></svg><div class="t gt" style="left:24px;top:1.800px">Normal</div></div>
</div>
<div class="row" style="left:0;top:40px;height:19px"><div class="cell" style="left:15px;width:877px;border-right:1px solid #bfbcab"><div class="t gt note" style="left:21px;top:2px">Perhaps a dinner in a wonderful hotel or restaurant, then taking a bath at home?</div></div></div>
<div class="row task" style="left:0;top:59px;height:22px">
<div class="cell" style="left:15px;width:55px"><div class="cb" style="left:20px;top:4px"></div></div>
<div class="cell" style="left:70px;width:66px"></div>
<div class="cell" style="left:136px;width:563px"><div class="t gt" style="left:2.500px;top:1.800px">Decide exactly the type of mood you want to set and choose a place to go to on Valentine's Day.</div></div>
<div class="cell" style="left:699px;width:193px;border-right:1px solid #bfbcab"><svg style="left:3px;top:2px" width="16" height="16" viewBox="0 0 16 16"><defs><radialGradient id="pg" cx=".32" cy=".28" r=".8"><stop offset="0" stop-color="#fbc88c"/><stop offset=".45" stop-color="#ee8a2e"/><stop offset=".75" stop-color="#e06a10"/><stop offset="1" stop-color="#c85808"/></radialGradient></defs><circle cx="8" cy="8" r="7.800" fill="url(#pg)"/><circle cx="8.200" cy="8.200" r="2.900" fill="#fff"/><path d="M2.800 7c.8-2.800 3.600-4.600 6.400-4" fill="none" stroke="#fde0bc" stroke-width="1.300" opacity=".75"/></svg><div class="t gt" style="left:24px;top:1.800px">Normal</div></div>
</div>
<div class="row task" style="left:0;top:81px;height:22px">
<div class="cell" style="left:15px;width:55px"><div class="cb" style="left:20px;top:4px"></div></div>
<div class="cell" style="left:70px;width:66px"><svg style="left:49px;top:2px" width="16" height="16" viewBox="0 0 16 16"><path d="M2.300 6.500l2.700 2.700 1.600 2 6.600-1-.5 4-9.500 2.300-1.200-1.500z" fill="#e4ecfb" stroke="#a9bde6" stroke-width=".5"/><path d="M4 13.200l7-1.300M3.800 14.600l7-1.500" stroke="#9cb4e6" stroke-width=".7"/><path d="M1.500 5.200L3 1h7l6 6v2.500L6.500 11 5 9 1.500 7.500z" fill="#27a127" stroke="#1b7a1f" stroke-width=".5"/><path d="M1.800 4.200L3 .8h6.800" fill="none" stroke="#2a3a2a" stroke-width=".8"/><path d="M0 9h2v6.200H0z" fill="#2fae2f"/><path d="M5.800 4.200h3.600" stroke="#d6f2d6" stroke-width="1"/><path d="M6.500 10.300l1.200-.2M9 9.900l1.200-.2M11.500 9.500l1.200-.2" stroke="#14401a" stroke-width=".9"/></svg></div>
<div class="cell" style="left:136px;width:563px"><div class="t gt" style="left:2.500px;top:1.800px">Research your city and list of all the restaurants in your area</div></div>
<div class="cell" style="left:699px;width:193px;border-right:1px solid #bfbcab"><svg style="left:3px;top:2px" width="16" height="16" viewBox="0 0 16 16"><defs><radialGradient id="pg" cx=".32" cy=".28" r=".8"><stop offset="0" stop-color="#fbc88c"/><stop offset=".45" stop-color="#ee8a2e"/><stop offset=".75" stop-color="#e06a10"/><stop offset="1" stop-color="#c85808"/></radialGradient></defs><circle cx="8" cy="8" r="7.800" fill="url(#pg)"/><circle cx="8.200" cy="8.200" r="2.900" fill="#fff"/><path d="M2.800 7c.8-2.800 3.600-4.600 6.400-4" fill="none" stroke="#fde0bc" stroke-width="1.300" opacity=".75"/></svg><div class="t gt" style="left:24px;top:1.800px">Normal</div></div>
</div>
<div class="row" style="left:0;top:103px;height:19px"><div class="cell" style="left:15px;width:877px;border-right:1px solid #bfbcab"><div class="t gt note" style="left:21px;top:2px">When visiting places make notes of times open, cost of visit, menus and hours of delivery, etc.</div></div></div>
<div class="row task" style="left:0;top:122px;height:22px">
<div class="cell" style="left:15px;width:55px"><div class="cb" style="left:20px;top:4px"></div></div>
<div class="cell" style="left:70px;width:66px"><svg style="left:49px;top:2px" width="16" height="16" viewBox="0 0 16 16"><path d="M2.300 6.500l2.700 2.700 1.600 2 6.600-1-.5 4-9.500 2.300-1.200-1.500z" fill="#e4ecfb" stroke="#a9bde6" stroke-width=".5"/><path d="M4 13.200l7-1.300M3.800 14.600l7-1.500" stroke="#9cb4e6" stroke-width=".7"/><path d="M1.500 5.200L3 1h7l6 6v2.500L6.500 11 5 9 1.500 7.500z" fill="#27a127" stroke="#1b7a1f" stroke-width=".5"/><path d="M1.800 4.200L3 .8h6.800" fill="none" stroke="#2a3a2a" stroke-width=".8"/><path d="M0 9h2v6.200H0z" fill="#2fae2f"/><path d="M5.800 4.200h3.600" stroke="#d6f2d6" stroke-width="1"/><path d="M6.500 10.300l1.200-.2M9 9.900l1.200-.2M11.500 9.500l1.200-.2" stroke="#14401a" stroke-width=".9"/></svg></div>
<div class="cell" style="left:136px;width:563px"><div class="t gt" style="left:2.500px;top:1.800px">Reserve a table in a hotel or restaurant</div></div>
<div class="cell" style="left:699px;width:193px;border-right:1px solid #bfbcab"><svg style="left:3px;top:2px" width="16" height="16" viewBox="0 0 16 16"><defs><radialGradient id="pg" cx=".32" cy=".28" r=".8"><stop offset="0" stop-color="#fbc88c"/><stop offset=".45" stop-color="#ee8a2e"/><stop offset=".75" stop-color="#e06a10"/><stop offset="1" stop-color="#c85808"/></radialGradient></defs><circle cx="8" cy="8" r="7.800" fill="url(#pg)"/><circle cx="8.200" cy="8.200" r="2.900" fill="#fff"/><path d="M2.800 7c.8-2.800 3.600-4.600 6.400-4" fill="none" stroke="#fde0bc" stroke-width="1.300" opacity=".75"/></svg><div class="t gt" style="left:24px;top:1.800px">Normal</div></div>
</div>
<div class="row" style="left:0;top:144px;height:19px"><div class="cell" style="left:15px;width:877px;border-right:1px solid #bfbcab"><div class="t gt note" style="left:21px;top:2px">Don't forget tipping requirements, transportation, dress code, etc.</div></div></div>
<div class="row task" style="left:0;top:163px;height:22px">
<div class="cell" style="left:15px;width:55px"><div class="cb" style="left:20px;top:4px"></div></div>
<div class="cell" style="left:70px;width:66px"></div>
<div class="cell" style="left:136px;width:563px"><div class="t gt" style="left:2.500px;top:1.800px">Let your date know about any information she or he needs to know, like dress codes, etc.</div></div>
<div class="cell" style="left:699px;width:193px;border-right:1px solid #bfbcab"><svg style="left:3px;top:2px" width="16" height="16" viewBox="0 0 16 16"><defs><radialGradient id="pg" cx=".32" cy=".28" r=".8"><stop offset="0" stop-color="#fbc88c"/><stop offset=".45" stop-color="#ee8a2e"/><stop offset=".75" stop-color="#e06a10"/><stop offset="1" stop-color="#c85808"/></radialGradient></defs><circle cx="8" cy="8" r="7.800" fill="url(#pg)"/><circle cx="8.200" cy="8.200" r="2.900" fill="#fff"/><path d="M2.800 7c.8-2.800 3.600-4.600 6.400-4" fill="none" stroke="#fde0bc" stroke-width="1.300" opacity=".75"/></svg><div class="t gt" style="left:24px;top:1.800px">Normal</div></div>
</div>
<div class="row cat" style="left:0;top:185px;height:18px"><div style="position:absolute;left:4px;top:5px;width:9px;height:9px;box-sizing:border-box;border:1px solid #8b9bb8;border-radius:1.500px;background:linear-gradient(135deg,#fff,#dcd9cc)"><div style="position:absolute;left:1.500px;top:3px;width:4px;height:1px;background:#000"></div></div><div class="t gt">Category : 2. Three weeks before</div></div>
<div class="row task" style="left:0;top:203px;height:22px">
<div class="cell" style="left:15px;width:55px"><div class="cb" style="left:20px;top:4px"></div></div>
<div class="cell" style="left:70px;width:66px"></div>
<div class="cell" style="left:136px;width:563px"><div class="t gt" style="left:2.500px;top:1.800px">Make sure your date is free on Valentine's night</div></div>
<div class="cell" style="left:699px;width:193px;border-right:1px solid #bfbcab"><svg style="left:3px;top:2px" width="16" height="16" viewBox="0 0 16 16"><defs><radialGradient id="pg" cx=".32" cy=".28" r=".8"><stop offset="0" stop-color="#fbc88c"/><stop offset=".45" stop-color="#ee8a2e"/><stop offset=".75" stop-color="#e06a10"/><stop offset="1" stop-color="#c85808"/></radialGradient></defs><circle cx="8" cy="8" r="7.800" fill="url(#pg)"/><circle cx="8.200" cy="8.200" r="2.900" fill="#fff"/><path d="M2.800 7c.8-2.800 3.600-4.600 6.400-4" fill="none" stroke="#fde0bc" stroke-width="1.300" opacity=".75"/></svg><div class="t gt" style="left:24px;top:1.800px">Normal</div></div>
</div>
<div class="row task" style="left:0;top:225px;height:22px">
<div class="cell" style="left:15px;width:55px"><div class="cb" style="left:20px;top:4px"></div></div>
<div class="cell" style="left:70px;width:66px"></div>
<div class="cell" style="left:136px;width:563px"><div class="t gt" style="left:2.500px;top:1.800px">Set a mutually convenient time for your date</div></div>
<div class="cell" style="left:699px;width:193px;border-right:1px solid #bfbcab"><svg style="left:3px;top:2px" width="16" height="16" viewBox="0 0 16 16"><defs><radialGradient id="pg" cx=".32" cy=".28" r=".8"><stop offset="0" stop-color="#fbc88c"/><stop offset=".45" stop-color="#ee8a2e"/><stop offset=".75" stop-color="#e06a10"/><stop offset="1" stop-color="#c85808"/></radialGradient></defs><circle cx="8" cy="8" r="7.800" fill="url(#pg)"/><circle cx="8.200" cy="8.200" r="2.900" fill="#fff"/><path d="M2.800 7c.8-2.800 3.600-4.600 6.400-4" fill="none" stroke="#fde0bc" stroke-width="1.300" opacity=".75"/></svg><div class="t gt" style="left:24px;top:1.800px">Normal</div></div>
</div>
<div class="row task" style="left:0;top:247px;height:22px">
<div class="cell" style="left:15px;width:55px"><div class="cb" style="left:20px;top:4px"></div></div>
<div class="cell" style="left:70px;width:66px"><svg style="left:49px;top:2px" width="16" height="16" viewBox="0 0 16 16"><path d="M2.300 6.500l2.700 2.700 1.600 2 6.600-1-.5 4-9.500 2.300-1.200-1.500z" fill="#e4ecfb" stroke="#a9bde6" stroke-width=".5"/><path d="M4 13.200l7-1.300M3.800 14.600l7-1.500" stroke="#9cb4e6" stroke-width=".7"/><path d="M1.500 5.200L3 1h7l6 6v2.500L6.500 11 5 9 1.500 7.500z" fill="#27a127" stroke="#1b7a1f" stroke-width=".5"/><path d="M1.800 4.200L3 .8h6.800" fill="none" stroke="#2a3a2a" stroke-width=".8"/><path d="M0 9h2v6.200H0z" fill="#2fae2f"/><path d="M5.800 4.200h3.600" stroke="#d6f2d6" stroke-width="1"/><path d="M6.500 10.300l1.200-.2M9 9.900l1.200-.2M11.500 9.500l1.200-.2" stroke="#14401a" stroke-width=".9"/></svg></div>
<div class="cell" style="left:136px;width:563px"><div class="t gt" style="left:2.500px;top:1.800px">Search for gift ideas</div></div>
<div class="cell" style="left:699px;width:193px;border-right:1px solid #bfbcab"><svg style="left:3px;top:2px" width="16" height="16" viewBox="0 0 16 16"><defs><radialGradient id="pg" cx=".32" cy=".28" r=".8"><stop offset="0" stop-color="#fbc88c"/><stop offset=".45" stop-color="#ee8a2e"/><stop offset=".75" stop-color="#e06a10"/><stop offset="1" stop-color="#c85808"/></radialGradient></defs><circle cx="8" cy="8" r="7.800" fill="url(#pg)"/><circle cx="8.200" cy="8.200" r="2.900" fill="#fff"/><path d="M2.800 7c.8-2.800 3.600-4.600 6.400-4" fill="none" stroke="#fde0bc" stroke-width="1.300" opacity=".75"/></svg><div class="t gt" style="left:24px;top:1.800px">Normal</div></div>
</div>
<div class="row" style="left:0;top:269px;height:32px"><div class="cell" style="left:15px;width:877px;border-right:1px solid #bfbcab"><div class="t gt note" style="left:21px;top:2px;line-height:13px">It doesn't have to be expensive, but it must show that you've put a lot of time and care into selecting it. If it is a traditional one, like flowers, chocolates or romantic sexy lingerie, try<br>make something unique with them.</div></div></div>
<div class="row cat" style="left:0;top:301px;height:18px"><div style="position:absolute;left:4px;top:5px;width:9px;height:9px;box-sizing:border-box;border:1px solid #8b9bb8;border-radius:1.500px;background:linear-gradient(135deg,#fff,#dcd9cc)"><div style="position:absolute;left:1.500px;top:3px;width:4px;height:1px;background:#000"></div></div><div class="t gt">Category : 3. Two weeks before</div></div>
<div class="row task" style="left:0;top:319px;height:22px">
<div class="cell" style="left:15px;width:55px"><div class="cb" style="left:20px;top:4px"></div></div>
<div class="cell" style="left:70px;width:66px"></div>
<div class="cell" style="left:136px;width:563px"><div class="t gt" style="left:2.500px;top:1.800px">Buy some mood-enhancing candles, romantic music CDs</div></div>
<div class="cell" style="left:699px;width:193px;border-right:1px solid #bfbcab"><svg style="left:3px;top:2px" width="16" height="16" viewBox="0 0 16 16"><defs><radialGradient id="pg" cx=".32" cy=".28" r=".8"><stop offset="0" stop-color="#fbc88c"/><stop offset=".45" stop-color="#ee8a2e"/><stop offset=".75" stop-color="#e06a10"/><stop offset="1" stop-color="#c85808"/></radialGradient></defs><circle cx="8" cy="8" r="7.800" fill="url(#pg)"/><circle cx="8.200" cy="8.200" r="2.900" fill="#fff"/><path d="M2.800 7c.8-2.800 3.600-4.600 6.400-4" fill="none" stroke="#fde0bc" stroke-width="1.300" opacity=".75"/></svg><div class="t gt" style="left:24px;top:1.800px">Normal</div></div>
</div>
<div class="row task" style="left:0;top:341px;height:22px">
<div class="cell" style="left:15px;width:55px"><div class="cb" style="left:20px;top:4px"></div></div>
<div class="cell" style="left:70px;width:66px"><svg style="left:49px;top:2px" width="16" height="16" viewBox="0 0 16 16"><path d="M2.300 6.500l2.700 2.700 1.600 2 6.600-1-.5 4-9.500 2.300-1.200-1.500z" fill="#e4ecfb" stroke="#a9bde6" stroke-width=".5"/><path d="M4 13.200l7-1.300M3.800 14.600l7-1.500" stroke="#9cb4e6" stroke-width=".7"/><path d="M1.500 5.200L3 1h7l6 6v2.500L6.500 11 5 9 1.500 7.500z" fill="#27a127" stroke="#1b7a1f" stroke-width=".5"/><path d="M1.800 4.200L3 .8h6.800" fill="none" stroke="#2a3a2a" stroke-width=".8"/><path d="M0 9h2v6.200H0z" fill="#2fae2f"/><path d="M5.800 4.200h3.600" stroke="#d6f2d6" stroke-width="1"/><path d="M6.500 10.300l1.200-.2M9 9.900l1.200-.2M11.500 9.500l1.200-.2" stroke="#14401a" stroke-width=".9"/></svg></div>
<div class="cell" style="left:136px;width:563px"><div class="t gt" style="left:2.500px;top:1.800px">If you're going out, get a nice new outfit for Valentine's</div></div>
<div class="cell" style="left:699px;width:193px;border-right:1px solid #bfbcab"><svg style="left:3px;top:2px" width="16" height="16" viewBox="0 0 16 16"><defs><radialGradient id="pg" cx=".32" cy=".28" r=".8"><stop offset="0" stop-color="#fbc88c"/><stop offset=".45" stop-color="#ee8a2e"/><stop offset=".75" stop-color="#e06a10"/><stop offset="1" stop-color="#c85808"/></radialGradient></defs><circle cx="8" cy="8" r="7.800" fill="url(#pg)"/><circle cx="8.200" cy="8.200" r="2.900" fill="#fff"/><path d="M2.800 7c.8-2.800 3.600-4.600 6.400-4" fill="none" stroke="#fde0bc" stroke-width="1.300" opacity=".75"/></svg><div class="t gt" style="left:24px;top:1.800px">Normal</div></div>
</div>
<div class="row" style="left:0;top:363px;height:19px"><div class="cell" style="left:15px;width:877px;border-right:1px solid #bfbcab"><div class="t gt note" style="left:21px;top:2px">Don't forget to wear it for an hour and break in any new shoes to make sure it will be comfortable.</div></div></div>
<div class="row cat" style="left:0;top:382px;height:18px"><div style="position:absolute;left:4px;top:5px;width:9px;height:9px;box-sizing:border-box;border:1px solid #8b9bb8;border-radius:1.500px;background:linear-gradient(135deg,#fff,#dcd9cc)"><div style="position:absolute;left:1.500px;top:3px;width:4px;height:1px;background:#000"></div></div><div class="t gt">Category : 4. One week before</div></div>
<div class="row task" style="left:0;top:400px;height:22px">
<div class="cell" style="left:15px;width:55px"><div class="cb" style="left:20px;top:4px"></div></div>
<div class="cell" style="left:70px;width:66px"></div>
<div class="cell" style="left:136px;width:563px"><div class="t gt" style="left:2.500px;top:1.800px">Confirm your bookings</div></div>
<div class="cell" style="left:699px;width:193px;border-right:1px solid #bfbcab"><svg style="left:3px;top:2px" width="16" height="16" viewBox="0 0 16 16"><defs><radialGradient id="pg" cx=".32" cy=".28" r=".8"><stop offset="0" stop-color="#fbc88c"/><stop offset=".45" stop-color="#ee8a2e"/><stop offset=".75" stop-color="#e06a10"/><stop offset="1" stop-color="#c85808"/></radialGradient></defs><circle cx="8" cy="8" r="7.800" fill="url(#pg)"/><circle cx="8.200" cy="8.200" r="2.900" fill="#fff"/><path d="M2.800 7c.8-2.800 3.600-4.600 6.400-4" fill="none" stroke="#fde0bc" stroke-width="1.300" opacity=".75"/></svg><div class="t gt" style="left:24px;top:1.800px">Normal</div></div>
</div>
<div class="row task" style="left:0;top:422px;height:22px">
<div class="cell" style="left:15px;width:55px"><div class="cb" style="left:20px;top:4px"></div></div>
<div class="cell" style="left:70px;width:66px"></div>
<div class="cell" style="left:136px;width:563px"><div class="t gt" style="left:2.500px;top:1.800px">Make sure your date knows the schedule and dress code.</div></div>
<div class="cell" style="left:699px;width:193px;border-right:1px solid #bfbcab"><svg style="left:3px;top:2px" width="16" height="16" viewBox="0 0 16 16"><defs><radialGradient id="pg" cx=".32" cy=".28" r=".8"><stop offset="0" stop-color="#fbc88c"/><stop offset=".45" stop-color="#ee8a2e"/><stop offset=".75" stop-color="#e06a10"/><stop offset="1" stop-color="#c85808"/></radialGradient></defs><circle cx="8" cy="8" r="7.800" fill="url(#pg)"/><circle cx="8.200" cy="8.200" r="2.900" fill="#fff"/><path d="M2.800 7c.8-2.800 3.600-4.600 6.400-4" fill="none" stroke="#fde0bc" stroke-width="1.300" opacity=".75"/></svg><div class="t gt" style="left:24px;top:1.800px">Normal</div></div>
</div>
<div class="row task" style="left:0;top:444px;height:22px">
<div class="cell" style="left:15px;width:55px"><div class="cb" style="left:20px;top:4px"></div></div>
<div class="cell" style="left:70px;width:66px"></div>
<div class="cell" style="left:136px;width:563px"><div class="t gt" style="left:2.500px;top:1.800px">Take some massage lessons</div></div>
<div class="cell" style="left:699px;width:193px;border-right:1px solid #bfbcab"><svg style="left:3px;top:2px" width="16" height="16" viewBox="0 0 16 16"><defs><radialGradient id="pg" cx=".32" cy=".28" r=".8"><stop offset="0" stop-color="#fbc88c"/><stop offset=".45" stop-color="#ee8a2e"/><stop offset=".75" stop-color="#e06a10"/><stop offset="1" stop-color="#c85808"/></radialGradient></defs><circle cx="8" cy="8" r="7.800" fill="url(#pg)"/><circle cx="8.200" cy="8.200" r="2.900" fill="#fff"/><path d="M2.800 7c.8-2.800 3.600-4.600 6.400-4" fill="none" stroke="#fde0bc" stroke-width="1.300" opacity=".75"/></svg><div class="t gt" style="left:24px;top:1.800px">Normal</div></div>
</div>
<div class="row cat" style="left:0;top:466px;height:18px"><div style="position:absolute;left:4px;top:5px;width:9px;height:9px;box-sizing:border-box;border:1px solid #8b9bb8;border-radius:1.500px;background:linear-gradient(135deg,#fff,#dcd9cc)"><div style="position:absolute;left:1.500px;top:3px;width:4px;height:1px;background:#000"></div></div><div class="t gt">Category : 5. One day before</div></div>
<div class="row task" style="left:0;top:484px;height:22px">
<div class="cell" style="left:15px;width:55px"><div class="cb" style="left:20px;top:4px"></div></div>
<div class="cell" style="left:70px;width:66px"></div>
<div class="cell" style="left:136px;width:563px"><div class="t gt" style="left:2.500px;top:1.800px">Confirm everything to be on the safe side</div></div>
<div class="cell" style="left:699px;width:193px;border-right:1px solid #bfbcab"><svg style="left:3px;top:2px" width="16" height="16" viewBox="0 0 16 16"><defs><radialGradient id="pg" cx=".32" cy=".28" r=".8"><stop offset="0" stop-color="#fbc88c"/><stop offset=".45" stop-color="#ee8a2e"/><stop offset=".75" stop-color="#e06a10"/><stop offset="1" stop-color="#c85808"/></radialGradient></defs><circle cx="8" cy="8" r="7.800" fill="url(#pg)"/><circle cx="8.200" cy="8.200" r="2.900" fill="#fff"/><path d="M2.800 7c.8-2.800 3.600-4.600 6.400-4" fill="none" stroke="#fde0bc" stroke-width="1.300" opacity=".75"/></svg><div class="t gt" style="left:24px;top:1.800px">Normal</div></div>
</div>
<div class="row task" style="left:0;top:506px;height:22px">
<div class="cell" style="left:15px;width:55px"><div class="cb" style="left:20px;top:4px"></div></div>
<div class="cell" style="left:70px;width:66px"></div>
<div class="cell" style="left:136px;width:563px"><div class="t gt" style="left:2.500px;top:1.800px">Make any time-consuming preparations</div></div>
<div class="cell" style="left:699px;width:193px;border-right:1px solid #bfbcab"><svg style="left:3px;top:2px" width="16" height="16" viewBox="0 0 16 16"><defs><radialGradient id="pg" cx=".32" cy=".28" r=".8"><stop offset="0" stop-color="#fbc88c"/><stop offset=".45" stop-color="#ee8a2e"/><stop offset=".75" stop-color="#e06a10"/><stop offset="1" stop-color="#c85808"/></radialGradient></defs><circle cx="8" cy="8" r="7.800" fill="url(#pg)"/><circle cx="8.200" cy="8.200" r="2.900" fill="#fff"/><path d="M2.800 7c.8-2.800 3.600-4.600 6.400-4" fill="none" stroke="#fde0bc" stroke-width="1.300" opacity=".75"/></svg><div class="t gt" style="left:24px;top:1.800px">Normal</div></div>
</div>
<div class="row cat" style="left:0;top:528px;height:18px"><div style="position:absolute;left:4px;top:5px;width:9px;height:9px;box-sizing:border-box;border:1px solid #8b9bb8;border-radius:1.500px;background:linear-gradient(135deg,#fff,#dcd9cc)"><div style="position:absolute;left:1.500px;top:3px;width:4px;height:1px;background:#000"></div></div><div class="t gt">Category : 6. On Valentine's Day</div></div>
<div class="row task" style="left:0;top:546px;height:22px">
<div class="cell" style="left:15px;width:55px"><div class="cb" style="left:20px;top:4px"></div></div>
<div class="cell" style="left:70px;width:66px"></div>
<div class="cell" style="left:136px;width:563px"><div class="t gt" style="left:2.500px;top:1.800px">(for her) go to a hair stylist and (for him) get a professional shave and cut</div></div>
<div class="cell" style="left:699px;width:193px;border-right:1px solid #bfbcab"><svg style="left:3px;top:2px" width="16" height="16" viewBox="0 0 16 16"><defs><radialGradient id="pg" cx=".32" cy=".28" r=".8"><stop offset="0" stop-color="#fbc88c"/><stop offset=".45" stop-color="#ee8a2e"/><stop offset=".75" stop-color="#e06a10"/><stop offset="1" stop-color="#c85808"/></radialGradient></defs><circle cx="8" cy="8" r="7.800" fill="url(#pg)"/><circle cx="8.200" cy="8.200" r="2.900" fill="#fff"/><path d="M2.800 7c.8-2.800 3.600-4.600 6.400-4" fill="none" stroke="#fde0bc" stroke-width="1.300" opacity=".75"/></svg><div class="t gt" style="left:24px;top:1.800px">Normal</div></div>
</div>
<div class="row task" style="left:0;top:568px;height:22px">
<div class="cell" style="left:15px;width:55px"><div class="cb" style="left:20px;top:4px"></div></div>
<div class="cell" style="left:70px;width:66px"></div>
<div class="cell" style="left:136px;width:563px"><div class="t gt" style="left:2.500px;top:1.800px">Place heart soaps in the bathroom and kitchen.</div></div>
<div class="cell" style="left:699px;width:193px;border-right:1px solid #bfbcab"><svg style="left:3px;top:2px" width="16" height="16" viewBox="0 0 16 16"><defs><radialGradient id="pg" cx=".32" cy=".28" r=".8"><stop offset="0" stop-color="#fbc88c"/><stop offset=".45" stop-color="#ee8a2e"/><stop offset=".75" stop-color="#e06a10"/><stop offset="1" stop-color="#c85808"/></radialGradient></defs><circle cx="8" cy="8" r="7.800" fill="url(#pg)"/><circle cx="8.200" cy="8.200" r="2.900" fill="#fff"/><path d="M2.800 7c.8-2.800 3.600-4.600 6.400-4" fill="none" stroke="#fde0bc" stroke-width="1.300" opacity=".75"/></svg><div class="t gt" style="left:24px;top:1.800px">Normal</div></div>
</div>
<div class="row task sel" style="left:0;top:590px;height:22px">
<div class="cell" style="left:15px;width:55px"><div class="cb" style="left:20px;top:4px"></div></div>
<div class="cell" style="left:70px;width:66px"></div>
<div class="cell" style="left:136px;width:563px"><div class="t gt" style="left:2.500px;top:1.800px">Have scented massage oils in the bedroom.</div></div>
<div class="cell" style="left:699px;width:193px;border-right:1px solid #bfbcab"><svg style="left:3px;top:2px" width="16" height="16" viewBox="0 0 16 16"><defs><radialGradient id="pg" cx=".32" cy=".28" r=".8"><stop offset="0" stop-color="#fbc88c"/><stop offset=".45" stop-color="#ee8a2e"/><stop offset=".75" stop-color="#e06a10"/><stop offset="1" stop-color="#c85808"/></radialGradient></defs><circle cx="8" cy="8" r="7.800" fill="url(#pg)"/><circle cx="8.200" cy="8.200" r="2.900" fill="#fff"/><path d="M2.800 7c.8-2.800 3.600-4.600 6.400-4" fill="none" stroke="#fde0bc" stroke-width="1.300" opacity=".75"/></svg><div class="t gt" style="left:24px;top:1.800px">Normal</div></div>
<div class="a" style="left:15px;top:0;width:877px;height:21px;border:1px dotted #b9b08a;box-sizing:border-box"></div>
</div>
<div class="row task" style="left:0;top:612px;height:22px">
<div class="cell" style="left:15px;width:55px"><div class="cb" style="left:20px;top:4px"></div></div>
<div class="cell" style="left:70px;width:66px"><svg style="left:49px;top:2px" width="16" height="16" viewBox="0 0 16 16"><path d="M2.300 6.500l2.700 2.700 1.600 2 6.600-1-.5 4-9.500 2.300-1.200-1.500z" fill="#e4ecfb" stroke="#a9bde6" stroke-width=".5"/><path d="M4 13.200l7-1.300M3.800 14.600l7-1.500" stroke="#9cb4e6" stroke-width=".7"/><path d="M1.500 5.200L3 1h7l6 6v2.500L6.500 11 5 9 1.500 7.500z" fill="#27a127" stroke="#1b7a1f" stroke-width=".5"/><path d="M1.800 4.200L3 .8h6.800" fill="none" stroke="#2a3a2a" stroke-width=".8"/><path d="M0 9h2v6.200H0z" fill="#2fae2f"/><path d="M5.800 4.200h3.600" stroke="#d6f2d6" stroke-width="1"/><path d="M6.500 10.300l1.200-.2M9 9.900l1.200-.2M11.500 9.500l1.200-.2" stroke="#14401a" stroke-width=".9"/></svg></div>
<div class="cell" style="left:136px;width:563px"><div class="t gt" style="left:2.500px;top:1.800px">Buy rose(s) or other flowers your date adores.</div></div>
<div class="cell" style="left:699px;width:193px;border-right:1px solid #bfbcab"><svg style="left:3px;top:2px" width="16" height="16" viewBox="0 0 16 16"><defs><radialGradient id="pg" cx=".32" cy=".28" r=".8"><stop offset="0" stop-color="#fbc88c"/><stop offset=".45" stop-color="#ee8a2e"/><stop offset=".75" stop-color="#e06a10"/><stop offset="1" stop-color="#c85808"/></radialGradient></defs><circle cx="8" cy="8" r="7.800" fill="url(#pg)"/><circle cx="8.200" cy="8.200" r="2.900" fill="#fff"/><path d="M2.800 7c.8-2.800 3.600-4.600 6.400-4" fill="none" stroke="#fde0bc" stroke-width="1.300" opacity=".75"/></svg><div class="t gt" style="left:24px;top:1.800px">Normal</div></div>
</div>
<div class="row" style="left:0;top:634px;height:19px"><div class="cell" style="left:15px;width:877px;border-right:1px solid #bfbcab"><div class="t gt note" style="left:21px;top:2px">Put them everywhere, or alternatively lay a rose on your love's pillow.</div></div></div>
<div class="row task" style="left:0;top:653px;height:22px">
<div class="cell" style="left:15px;width:55px"><div class="cb" style="left:20px;top:4px"></div></div>
<div class="cell" style="left:70px;width:66px"><svg style="left:49px;top:2px" width="16" height="16" viewBox="0 0 16 16"><path d="M2.300 6.500l2.700 2.700 1.600 2 6.600-1-.5 4-9.500 2.300-1.200-1.500z" fill="#e4ecfb" stroke="#a9bde6" stroke-width=".5"/><path d="M4 13.200l7-1.300M3.800 14.600l7-1.500" stroke="#9cb4e6" stroke-width=".7"/><path d="M1.500 5.200L3 1h7l6 6v2.500L6.500 11 5 9 1.500 7.500z" fill="#27a127" stroke="#1b7a1f" stroke-width=".5"/><path d="M1.800 4.200L3 .8h6.800" fill="none" stroke="#2a3a2a" stroke-width=".8"/><path d="M0 9h2v6.200H0z" fill="#2fae2f"/><path d="M5.800 4.200h3.600" stroke="#d6f2d6" stroke-width="1"/><path d="M6.500 10.300l1.200-.2M9 9.900l1.200-.2M11.500 9.500l1.200-.2" stroke="#14401a" stroke-width=".9"/></svg></div>
<div class="cell" style="left:136px;width:563px"><div class="t gt" style="left:2.500px;top:1.800px">Buy as many candles of all shapes and sizes and candlestick holders as possible.</div></div>
<div class="cell" style="left:699px;width:193px;border-right:1px solid #bfbcab"><svg style="left:3px;top:2px" width="16" height="16" viewBox="0 0 16 16"><defs><radialGradient id="pg" cx=".32" cy=".28" r=".8"><stop offset="0" stop-color="#fbc88c"/><stop offset=".45" stop-color="#ee8a2e"/><stop offset=".75" stop-color="#e06a10"/><stop offset="1" stop-color="#c85808"/></radialGradient></defs><circle cx="8" cy="8" r="7.800" fill="url(#pg)"/><circle cx="8.200" cy="8.200" r="2.900" fill="#fff"/><path d="M2.800 7c.8-2.800 3.600-4.600 6.400-4" fill="none" stroke="#fde0bc" stroke-width="1.300" opacity=".75"/></svg><div class="t gt" style="left:24px;top:1.800px">Normal</div></div>
</div>
<div class="row" style="left:0;top:675px;height:19px"><div class="cell" style="left:15px;width:877px;border-right:1px solid #bfbcab"><div class="t gt note" style="left:21px;top:2px">Place them everywhere and light them every night instead of using your normal lighting.</div></div></div>
<div class="row task" style="left:0;top:694px;height:22px">
<div class="cell" style="left:15px;width:55px"><div class="cb" style="left:20px;top:4px"></div></div>
<div class="cell" style="left:70px;width:66px"></div>
<div class="cell" style="left:136px;width:563px"><div class="t gt" style="left:2.500px;top:1.800px">Play romantic music.</div></div>
<div class="cell" style="left:699px;width:193px;border-right:1px solid #bfbcab"><svg style="left:3px;top:2px" width="16" height="16" viewBox="0 0 16 16"><defs><radialGradient id="pg" cx=".32" cy=".28" r=".8"><stop offset="0" stop-color="#fbc88c"/><stop offset=".45" stop-color="#ee8a2e"/><stop offset=".75" stop-color="#e06a10"/><stop offset="1" stop-color="#c85808"/></radialGradient></defs><circle cx="8" cy="8" r="7.800" fill="url(#pg)"/><circle cx="8.200" cy="8.200" r="2.900" fill="#fff"/><path d="M2.800 7c.8-2.800 3.600-4.600 6.400-4" fill="none" stroke="#fde0bc" stroke-width="1.300" opacity=".75"/></svg><div class="t gt" style="left:24px;top:1.800px">Normal</div></div>
</div>
<div class="row task" style="left:0;top:716px;height:22px">
<div class="cell" style="left:15px;width:55px"><div class="cb" style="left:20px;top:4px"></div></div>
<div class="cell" style="left:70px;width:66px"></div>
<div class="cell" style="left:136px;width:563px"><div class="t gt" style="left:2.500px;top:1.800px">Make sure you smell sweet, relax, act charmingly and enjoy your romantic date!</div></div>
<div class="cell" style="left:699px;width:193px;border-right:1px solid #bfbcab"><svg style="left:3px;top:2px" width="16" height="16" viewBox="0 0 16 16"><defs><radialGradient id="pg" cx=".32" cy=".28" r=".8"><stop offset="0" stop-color="#fbc88c"/><stop offset=".45" stop-color="#ee8a2e"/><stop offset=".75" stop-color="#e06a10"/><stop offset="1" stop-color="#c85808"/></radialGradient></defs><circle cx="8" cy="8" r="7.800" fill="url(#pg)"/><circle cx="8.200" cy="8.200" r="2.900" fill="#fff"/><path d="M2.800 7c.8-2.800 3.600-4.600 6.400-4" fill="none" stroke="#fde0bc" stroke-width="1.300" opacity=".75"/></svg><div class="t gt" style="left:24px;top:1.800px">Normal</div></div>
</div>
<div class="row cat" style="left:0;top:738px;height:18px"><div style="position:absolute;left:4px;top:5px;width:9px;height:9px;box-sizing:border-box;border:1px solid #8b9bb8;border-radius:1.500px;background:linear-gradient(135deg,#fff,#dcd9cc)"><div style="position:absolute;left:1.500px;top:3px;width:4px;height:1px;background:#000"></div></div><div class="t gt">Category : 7. Romantic Mood Essentials</div></div>
<div class="row task" style="left:0;top:756px;height:22px">
<div class="cell" style="left:15px;width:55px"><div class="cb" style="left:20px;top:4px"></div></div>
<div class="cell" style="left:70px;width:66px"></div>
<div class="cell" style="left:136px;width:563px"><div class="t gt" style="left:2.500px;top:1.800px">Bed Tray Breakfast</div></div>
<div class="cell" style="left:699px;width:193px;border-right:1px solid #bfbcab"><svg style="left:3px;top:2px" width="16" height="16" viewBox="0 0 16 16"><defs><radialGradient id="pg" cx=".32" cy=".28" r=".8"><stop offset="0" stop-color="#fbc88c"/><stop offset=".45" stop-color="#ee8a2e"/><stop offset=".75" stop-color="#e06a10"/><stop offset="1" stop-color="#c85808"/></radialGradient></defs><circle cx="8" cy="8" r="7.800" fill="url(#pg)"/><circle cx="8.200" cy="8.200" r="2.900" fill="#fff"/><path d="M2.800 7c.8-2.800 3.600-4.600 6.400-4" fill="none" stroke="#fde0bc" stroke-width="1.300" opacity=".75"/></svg><div class="t gt" style="left:24px;top:1.800px">Normal</div></div>
</div>
<div class="row task" style="left:0;top:778px;height:22px">
<div class="cell" style="left:15px;width:55px"><div class="cb" style="left:20px;top:4px"></div></div>
<div class="cell" style="left:70px;width:66px"></div>
<div class="cell" style="left:136px;width:563px"><div class="t gt" style="left:2.500px;top:1.800px">Bubble Bath</div></div>
<div class="cell" style="left:699px;width:193px;border-right:1px solid #bfbcab"><svg style="left:3px;top:2px" width="16" height="16" viewBox="0 0 16 16"><defs><radialGradient id="pg" cx=".32" cy=".28" r=".8"><stop offset="0" stop-color="#fbc88c"/><stop offset=".45" stop-color="#ee8a2e"/><stop offset=".75" stop-color="#e06a10"/><stop offset="1" stop-color="#c85808"/></radialGradient></defs><circle cx="8" cy="8" r="7.800" fill="url(#pg)"/><circle cx="8.200" cy="8.200" r="2.900" fill="#fff"/><path d="M2.800 7c.8-2.800 3.600-4.600 6.400-4" fill="none" stroke="#fde0bc" stroke-width="1.300" opacity=".75"/></svg><div class="t gt" style="left:24px;top:1.800px">Normal</div></div>
</div>
<div class="row task" style="left:0;top:800px;height:22px">
<div class="cell" style="left:15px;width:55px"><div class="cb" style="left:20px;top:4px"></div></div>
<div class="cell" style="left:70px;width:66px"></div>
<div class="cell" style="left:136px;width:563px"><div class="t gt" style="left:2.500px;top:1.800px">Champagne and champagne glasses</div></div>
<div class="cell" style="left:699px;width:193px;border-right:1px solid #bfbcab"><svg style="left:3px;top:2px" width="16" height="16" viewBox="0 0 16 16"><defs><radialGradient id="pg" cx=".32" cy=".28" r=".8"><stop offset="0" stop-color="#fbc88c"/><stop offset=".45" stop-color="#ee8a2e"/><stop offset=".75" stop-color="#e06a10"/><stop offset="1" stop-color="#c85808"/></radialGradient></defs><circle cx="8" cy="8" r="7.800" fill="url(#pg)"/><circle cx="8.200" cy="8.200" r="2.900" fill="#fff"/><path d="M2.800 7c.8-2.800 3.600-4.600 6.400-4" fill="none" stroke="#fde0bc" stroke-width="1.300" opacity=".75"/></svg><div class="t gt" style="left:24px;top:1.800px">Normal</div></div>
</div>
</div>
<div class="a" style="left:185px;top:950px;width:892px;height:25px;background:#ece9d8;border-top:1px solid #bfbcab;border-right:1px solid #bfbcab;box-sizing:border-box"><div class="a" style="left:137px;top:3px;width:561px;height:18px;box-shadow:inset 1px 1px 0 #bfbcab;background:#f0ede0"><div class="t gt" style="left:4px;top:2px">33</div></div></div>
<div class="a" style="left:1078px;top:87px;width:16px;height:888px;background:#fbfaf7"></div>
<div class="a" style="left:1095px;top:86px;width:2.500px;height:917px;background:#f6f2ea"></div>
<div class="a" style="left:1078px;top:87px;width:16px;height:16px;background:linear-gradient(90deg,#cfdbfb,#b9c9f5);border-radius:2px;box-shadow:inset 0 0 0 1px #eef2fd"><svg style="left:0px;top:0px" width="16" height="16" viewBox="0 0 16 16"><path d="M4 10l4-4 4 4" fill="none" stroke="#3a4f80" stroke-width="1.900"/></svg></div>
<div class="a" style="left:1078px;top:104px;width:16px;height:660px;background:linear-gradient(90deg,#cfdbfb,#b9c9f5 70%,#a9bcf0);border-radius:2px;box-shadow:inset 0 0 0 1px #e6ecfc"></div>
<div class="a" style="left:1078px;top:959px;width:16px;height:16px;background:linear-gradient(90deg,#cfdbfb,#b9c9f5);border-radius:2px;box-shadow:inset 0 0 0 1px #eef2fd"><svg style="left:0px;top:0px" width="16" height="16" viewBox="0 0 16 16"><path d="M4 6l4 4 4-4" fill="none" stroke="#3a4f80" stroke-width="1.900"/></svg></div>
<div class="a" style="left:185px;top:977px;width:910px;height:26px;background:linear-gradient(#fbfbf8,#f3f2ea)"></div>
<div class="a" style="left:189px;top:978px;width:74px;height:25px;border:1px solid #9fb1cf;border-bottom:none;border-radius:3px 3px 0 0;box-sizing:border-box;background:linear-gradient(#fdfdfb,#eeece2)"><div class="t" style="left:0.500px;top:3.500px;letter-spacing:-0.150px">Search result</div></div>
<div class="a" style="left:1097.500px;top:85px;width:183px;height:918px;background:#ece9d8"></div>
<div class="phdr" style="top:88px;height:21px;background:linear-gradient(#fbfaf6,#f1efe3);border:1px solid #dcd9c9"><div class="t" style="left:1.500px;top:2px">Categories Bar</div><svg style="left:129.5px;top:3px" width="13" height="13" viewBox="0 0 13 13"><rect x=".5" y=".5" width="12" height="12" rx="2" fill="#2a6ae0" stroke="#7fa8f0" stroke-width=".6"/><rect x="3.500" y="3.500" width="6" height="6" fill="none" stroke="#fff" stroke-width="1.400"/></svg><svg style="left:146px;top:3px" width="13" height="13" viewBox="0 0 13 13"><path d="M4 1.500h5M5 1.500v4.500M8.500 1.500v4.500M2.500 6.500h8M6.500 6.500V12" fill="none" stroke="#1f5fd0" stroke-width="1.300"/></svg><svg style="left:161.5px;top:3px" width="13" height="13" viewBox="0 0 13 13"><rect x=".5" y=".5" width="12" height="12" rx="1.500" fill="#d8541c" stroke="#e8a07a" stroke-width=".6"/><path d="M3.500 3.500l6 6M9.500 3.500l-6 6" stroke="#fff" stroke-width="1.800"/></svg></div>
<div class="a" style="left:1097px;top:110px;width:182px;height:228px;background:#fff;border:1px solid #a9bce8;box-shadow:inset 0 0 0 1px #dde5f8;box-sizing:border-box;overflow:hidden">
<div class="a" style="left:9px;top:11px;width:1px;height:108px;background:repeating-linear-gradient(#c9c6b6 0 1px,transparent 1px 2px)"></div>
<div class="a" style="left:9px;top:10px;width:11px;height:1px;background:repeating-linear-gradient(90deg,#c9c6b6 0 1px,transparent 1px 2px)"></div>
<svg style="left:22px;top:2px" width="16" height="16" viewBox="0 0 16 16"><path d="M0 15.500c0-4.500 2-6.500 4.800-6.500s4.800 2 4.800 6.500z" fill="#3a6fe0" stroke="#1f47a8" stroke-width=".5"/><circle cx="4.800" cy="5.200" r="3.300" fill="#f0944a" stroke="#9a4a1a" stroke-width=".5"/><path d="M1.600 4.500c.3-2.500 2-3.500 3.500-3.300 1.500.2 2.800 1.300 2.900 3-1.200.3-2.200-.2-2.900-1-.9.900-2.200 1.400-3.500 1.300z" fill="#c8641e"/><path d="M7.300 15.500c0-4.500 1.800-6.500 4.300-6.500s4.300 2 4.300 6.500z" fill="#2f9a3f" stroke="#1a6a26" stroke-width=".5"/><circle cx="11.600" cy="5.200" r="3.200" fill="#e8843a" stroke="#5a2a0a" stroke-width=".5"/><path d="M8.300 5c0-2.600 1.600-3.900 3.400-3.900s3.300 1.400 3.300 3.900c-1-.2-1.700-.8-2-1.600-1.300 1.100-3 1.600-4.700 1.600z" fill="#2a1a12"/><rect x="3.800" y="11" width="2" height="2" fill="#fff" opacity=".8"/></svg>
<div class="t" style="left:42px;top:2.5px;width:135.500px;overflow:hidden">1. Four weeks before</div>
<div class="a" style="left:9px;top:28px;width:11px;height:1px;background:repeating-linear-gradient(90deg,#c9c6b6 0 1px,transparent 1px 2px)"></div>
<svg style="left:22px;top:20px" width="16" height="16" viewBox="0 0 16 16"><path d="M1 4l7 2.500L15 4v8.500L8 15 1 12.500z" fill="#fff" stroke="#e0863a" stroke-width="1"/><path d="M8 6.500V15" stroke="#e0863a" stroke-width=".8"/><path d="M3 7l3.500 1.200M3 9l3.500 1.200M9.500 8.200L13 7M9.500 10.200L13 9" stroke="#f0b88a" stroke-width=".7"/></svg>
<div class="t" style="left:42px;top:20.5px;width:135.500px;overflow:hidden">2. Three weeks before</div>
<div class="a" style="left:9px;top:46px;width:11px;height:1px;background:repeating-linear-gradient(90deg,#c9c6b6 0 1px,transparent 1px 2px)"></div>
<svg style="left:22px;top:38px" width="16" height="16" viewBox="0 0 16 16"><rect x="2.500" y="2" width="11" height="13" rx="1" fill="#c9793a" stroke="#7a451a" stroke-width=".8"/><rect x="4" y="3.500" width="8" height="10" fill="#fff"/><rect x="5.500" y=".8" width="5" height="2.500" rx=".8" fill="#c9ccd4" stroke="#6f7586" stroke-width=".6"/><path d="M5.500 6h5M5.500 8h5M5.500 10h4" stroke="#777" stroke-width=".8"/><path d="M7.500 5v7" stroke="#444" stroke-width="1"/></svg>
<div class="t" style="left:42px;top:38.5px;width:135.500px;overflow:hidden">3. Two weeks before</div>
<div class="a" style="left:9px;top:64px;width:11px;height:1px;background:repeating-linear-gradient(90deg,#c9c6b6 0 1px,transparent 1px 2px)"></div>
<svg style="left:22px;top:56px" width="16" height="16" viewBox="0 0 16 16"><path d="M8 2.500c4.500 0 7.500 2.500 7.500 5.500s-2.500 3-4 2.800c-1.500-.2-2 .8-1.500 1.800.5 1-.5 1.900-2.500 1.900C3.500 14.500.5 12 .5 8.500S3.500 2.500 8 2.500z" fill="#f0a45a" stroke="#a8601a" stroke-width=".7"/><circle cx="4" cy="7" r="1.300" fill="#3f7ae0"/><circle cx="7.500" cy="5.200" r="1.300" fill="#e03a2a"/><circle cx="11.500" cy="6.200" r="1.300" fill="#3fae3f"/><circle cx="4.500" cy="10.500" r="1.300" fill="#fff"/></svg>
<div class="t" style="left:42px;top:56.5px;width:135.500px;overflow:hidden">4. One week before</div>
<div class="a" style="left:9px;top:82px;width:11px;height:1px;background:repeating-linear-gradient(90deg,#c9c6b6 0 1px,transparent 1px 2px)"></div>
<svg style="left:22px;top:74px" width="16" height="16" viewBox="0 0 16 16"><path d="M2.500 1v14.500" stroke="#3a3a4a" stroke-width="1.300"/><path d="M3.200 2c2-1.200 4 .8 6 0s3-.8 5 .2v7c-2-1-3-1-5-.2s-4-1.200-6 0z" fill="#3f6fd8" stroke="#1f3f9a" stroke-width=".6"/><path d="M5 4.500h2v2H5zM9 5h2v2H9z" fill="#8fb0f0"/></svg>
<div class="t" style="left:42px;top:74.5px;width:135.500px;overflow:hidden">5. One day before</div>
<div class="a" style="left:9px;top:100px;width:11px;height:1px;background:repeating-linear-gradient(90deg,#c9c6b6 0 1px,transparent 1px 2px)"></div>
<svg style="left:22px;top:92px" width="16" height="16" viewBox="0 0 16 16"><path d="M0 15.500c0-4.500 2-6.500 4.800-6.500s4.800 2 4.800 6.500z" fill="#3a6fe0" stroke="#1f47a8" stroke-width=".5"/><circle cx="4.800" cy="5.200" r="3.300" fill="#f0944a" stroke="#9a4a1a" stroke-width=".5"/><path d="M1.600 4.500c.3-2.500 2-3.500 3.500-3.300 1.500.2 2.800 1.300 2.900 3-1.200.3-2.200-.2-2.900-1-.9.900-2.200 1.400-3.500 1.300z" fill="#c8641e"/><path d="M7.300 15.500c0-4.500 1.800-6.500 4.300-6.500s4.300 2 4.300 6.500z" fill="#2f9a3f" stroke="#1a6a26" stroke-width=".5"/><circle cx="11.600" cy="5.200" r="3.200" fill="#e8843a" stroke="#5a2a0a" stroke-width=".5"/><path d="M8.300 5c0-2.600 1.600-3.900 3.400-3.900s3.300 1.400 3.300 3.900c-1-.2-1.700-.8-2-1.600-1.300 1.100-3 1.600-4.700 1.600z" fill="#2a1a12"/><rect x="3.800" y="11" width="2" height="2" fill="#fff" opacity=".8"/></svg>
<div class="t" style="left:42px;top:92.5px;width:135.500px;overflow:hidden">6. On Valentine's Day</div>
<div class="a" style="left:9px;top:118px;width:11px;height:1px;background:repeating-linear-gradient(90deg,#c9c6b6 0 1px,transparent 1px 2px)"></div>
<div class="a" style="left:19.500px;top:108.8px;width:159px;height:18.200px;border:1px solid #222;box-sizing:border-box"></div>
<svg style="left:22px;top:110px" width="16" height="16" viewBox="0 0 16 16"><circle cx="11" cy="5" r="4.200" fill="#fad27e" stroke="#e0962a" stroke-width=".9"/><circle cx="12" cy="4" r="1.300" fill="#fff"/><path d="M8 7.500L1.500 14l1 1.200 1.500-.3.200-1.500 1.500-.2.200-1.500 1.500-.2L9.500 9z" fill="#fad27e" stroke="#e0962a" stroke-width=".8"/></svg>
<div class="t" style="left:42px;top:110.5px;width:135.500px;overflow:hidden">7. Romantic Mood Essentials</div>
</div>
<div class="phdr" style="top:343px;background:#d6dff7;border:1px solid #e4e9f8"><div class="t" style="left:1.500px;top:2px">Filters Bar</div><svg style="left:129.5px;top:3px" width="13" height="13" viewBox="0 0 13 13"><rect x=".5" y=".5" width="12" height="12" rx="2" fill="#2a6ae0" stroke="#7fa8f0" stroke-width=".6"/><rect x="3.500" y="3.500" width="6" height="6" fill="none" stroke="#fff" stroke-width="1.400"/></svg><svg style="left:146px;top:3px" width="13" height="13" viewBox="0 0 13 13"><path d="M4 1.500h5M5 1.500v4.500M8.500 1.500v4.500M2.500 6.500h8M6.500 6.500V12" fill="none" stroke="#1f5fd0" stroke-width="1.300"/></svg><svg style="left:161.5px;top:3px" width="13" height="13" viewBox="0 0 13 13"><rect x=".5" y=".5" width="12" height="12" rx="1.500" fill="#d8541c" stroke="#e8a07a" stroke-width=".6"/><path d="M3.500 3.500l6 6M9.500 3.500l-6 6" stroke="#fff" stroke-width="1.800"/></svg></div>
<div class="t" style="left:1107px;top:372px;font-weight:bold;font-size:11.450px">Filter By Done:</div>
<div class="a" style="left:1105px;top:390px;width:121px;height:21px;background:#fff;border:1px solid #7f9db9;box-sizing:border-box"><div class="t" style="left:3px;top:1.7px">All</div><div class="a" style="right:1px;top:1px;width:16px;height:17px;border-radius:2px;background:linear-gradient(#cdd9fb,#b4c5f3);box-shadow:0 0 0 1px #e3e9fc"><svg style="left:3px;top:3.5px" width="10" height="10" viewBox="0 0 10 10"><path d="M1.500 3l3.500 3.800L8.500 3" fill="none" stroke="#3a4f80" stroke-width="1.800"/></svg></div></div>
<div class="t" style="left:1107px;top:420px;font-weight:bold;font-size:11.450px">Filter By Due Date:</div>
<div class="a" style="left:1108px;top:446px;width:0;height:0;border-top:4px solid transparent;border-bottom:4px solid transparent;border-right:4px solid #000"></div>
<div class="a" style="left:1243px;top:446px;width:0;height:0;border-top:4px solid transparent;border-bottom:4px solid transparent;border-left:4px solid #000"></div>
<div class="t" style="left:1102px;width:150px;text-align:center;top:443px">Январь 2006</div>
<div class="a" style="left:1102px;top:457.5px;width:150px;height:1px;background:#000"></div>
<div class="t" style="left:1117.75px;width:14px;text-align:center;top:460px;letter-spacing:0">П</div>
<div class="t" style="left:1135.8px;width:14px;text-align:center;top:460px;letter-spacing:0">В</div>
<div class="t" style="left:1153.85px;width:14px;text-align:center;top:460px;letter-spacing:0">С</div>
<div class="t" style="left:1171.9px;width:14px;text-align:center;top:460px;letter-spacing:0">Ч</div>
<div class="t" style="left:1189.95px;width:14px;text-align:center;top:460px;letter-spacing:0">П</div>
<div class="t" style="left:1208.0px;width:14px;text-align:center;top:460px;letter-spacing:0">С</div>
<div class="t" style="left:1226.05px;width:14px;text-align:center;top:460px;letter-spacing:0">В</div>
<div class="a" style="left:1114px;top:474px;width:126px;height:1px;background:#aca899"></div>
<div class="t" style="left:1098.75px;width:30px;text-align:right;top:477px;color:#aca899">26</div>
<div class="t" style="left:1116.8px;width:30px;text-align:right;top:477px;color:#aca899">27</div>
<div class="t" style="left:1134.85px;width:30px;text-align:right;top:477px;color:#aca899">28</div>
<div class="t" style="left:1152.9px;width:30px;text-align:right;top:477px;color:#aca899">29</div>
<div class="t" style="left:1170.95px;width:30px;text-align:right;top:477px;color:#aca899">30</div>
<div class="t" style="left:1189.0px;width:30px;text-align:right;top:477px;color:#aca899">31</div>
<div class="t" style="left:1207.05px;width:30px;text-align:right;top:477px;color:#000">1</div>
<div class="t" style="left:1098.75px;width:30px;text-align:right;top:492px;color:#000">2</div>
<div class="t" style="left:1116.8px;width:30px;text-align:right;top:492px;color:#000">3</div>
<div class="t" style="left:1134.85px;width:30px;text-align:right;top:492px;color:#000">4</div>
<div class="t" style="left:1152.9px;width:30px;text-align:right;top:492px;color:#000">5</div>
<div class="t" style="left:1170.95px;width:30px;text-align:right;top:492px;color:#000">6</div>
<div class="t" style="left:1189.0px;width:30px;text-align:right;top:492px;color:#000">7</div>
<div class="t" style="left:1207.05px;width:30px;text-align:right;top:492px;color:#000">8</div>
<div class="t" style="left:1098.75px;width:30px;text-align:right;top:507px;color:#000">9</div>
<div class="t" style="left:1116.8px;width:30px;text-align:right;top:507px;color:#000">10</div>
<div class="t" style="left:1134.85px;width:30px;text-align:right;top:507px;color:#000">11</div>
<div class="t" style="left:1152.9px;width:30px;text-align:right;top:507px;color:#000">12</div>
<div class="t" style="left:1170.95px;width:30px;text-align:right;top:507px;color:#000">13</div>
<div class="t" style="left:1189.0px;width:30px;text-align:right;top:507px;color:#000">14</div>
<div class="t" style="left:1207.05px;width:30px;text-align:right;top:507px;color:#000">15</div>
<div class="t" style="left:1098.75px;width:30px;text-align:right;top:522px;color:#000">16</div>
<div class="t" style="left:1116.8px;width:30px;text-align:right;top:522px;color:#000">17</div>
<div class="a" style="left:1148.85px;top:521.5px;width:18px;height:15px;background:#316ac5;border:1px dotted #d0581a;box-sizing:border-box"></div>
<div class="t" style="left:1134.85px;width:30px;text-align:right;top:522px;color:#fff">18</div>
<div class="t" style="left:1152.9px;width:30px;text-align:right;top:522px;color:#000">19</div>
<div class="t" style="left:1170.95px;width:30px;text-align:right;top:522px;color:#000">20</div>
<div class="t" style="left:1189.0px;width:30px;text-align:right;top:522px;color:#000">21</div>
<div class="t" style="left:1207.05px;width:30px;text-align:right;top:522px;color:#000">22</div>
<div class="t" style="left:1098.75px;width:30px;text-align:right;top:537px;color:#000">23</div>
<div class="t" style="left:1116.8px;width:30px;text-align:right;top:537px;color:#000">24</div>
<div class="t" style="left:1134.85px;width:30px;text-align:right;top:537px;color:#000">25</div>
<div class="t" style="left:1152.9px;width:30px;text-align:right;top:537px;color:#000">26</div>
<div class="t" style="left:1170.95px;width:30px;text-align:right;top:537px;color:#000">27</div>
<div class="t" style="left:1189.0px;width:30px;text-align:right;top:537px;color:#000">28</div>
<div class="t" style="left:1207.05px;width:30px;text-align:right;top:537px;color:#000">29</div>
<div class="t" style="left:1098.75px;width:30px;text-align:right;top:552px;color:#000">30</div>
<div class="t" style="left:1116.8px;width:30px;text-align:right;top:552px;color:#000">31</div>
<div class="t" style="left:1134.85px;width:30px;text-align:right;top:552px;color:#aca899">1</div>
<div class="t" style="left:1152.9px;width:30px;text-align:right;top:552px;color:#aca899">2</div>
<div class="t" style="left:1170.95px;width:30px;text-align:right;top:552px;color:#aca899">3</div>
<div class="t" style="left:1189.0px;width:30px;text-align:right;top:552px;color:#aca899">4</div>
<div class="t" style="left:1207.05px;width:30px;text-align:right;top:552px;color:#aca899">5</div>
<div class="a" style="left:1114px;top:566px;width:126px;height:1px;background:#aca899"></div>
<div class="a" style="left:1121px;top:572px;width:48px;height:19px;border:1px solid #335ea8;border-radius:3px;box-sizing:border-box;background:linear-gradient(#fff,#ecebe5 85%,#d6d0c5)"><div class="t" style="left:0;width:46px;text-align:center;top:1.5px;font-weight:bold;color:#aca899;text-shadow:1px 1px 0 #fff;font-size:13.800px">Today</div></div>
<div class="a" style="left:1186px;top:572px;width:48px;height:19px;border:1px solid #335ea8;border-radius:3px;box-sizing:border-box;background:linear-gradient(#fff,#ecebe5 85%,#d6d0c5)"><div class="t" style="left:0;width:46px;text-align:center;top:1.5px;font-weight:bold;color:#aca899;text-shadow:1px 1px 0 #fff;font-size:13.800px">Clear</div></div>
<div class="a" style="left:1105px;top:606px;width:145px;height:21px;background:#fff;border:1px solid #7f9db9;box-sizing:border-box"><div class="t" style="left:3px;top:1.7px">is less than or equal to</div><div class="a" style="right:1px;top:1px;width:16px;height:17px;border-radius:2px;background:linear-gradient(#cdd9fb,#b4c5f3);box-shadow:0 0 0 1px #e3e9fc"><svg style="left:3px;top:3.5px" width="10" height="10" viewBox="0 0 10 10"><path d="M1.500 3l3.500 3.800L8.500 3" fill="none" stroke="#3a4f80" stroke-width="1.800"/></svg></div></div>
<div class="a" style="left:0;top:1003px;width:1280px;height:1px;background:#8a8778"></div>
<div class="a" style="left:0;top:1004px;width:1280px;height:17px;background:#ece9d8"></div>
<div class="a" style="left:0;top:1021px;width:1280px;height:4px;background:linear-gradient(#3d8ef5,#0a5be0)"></div>
</div></body></html>
